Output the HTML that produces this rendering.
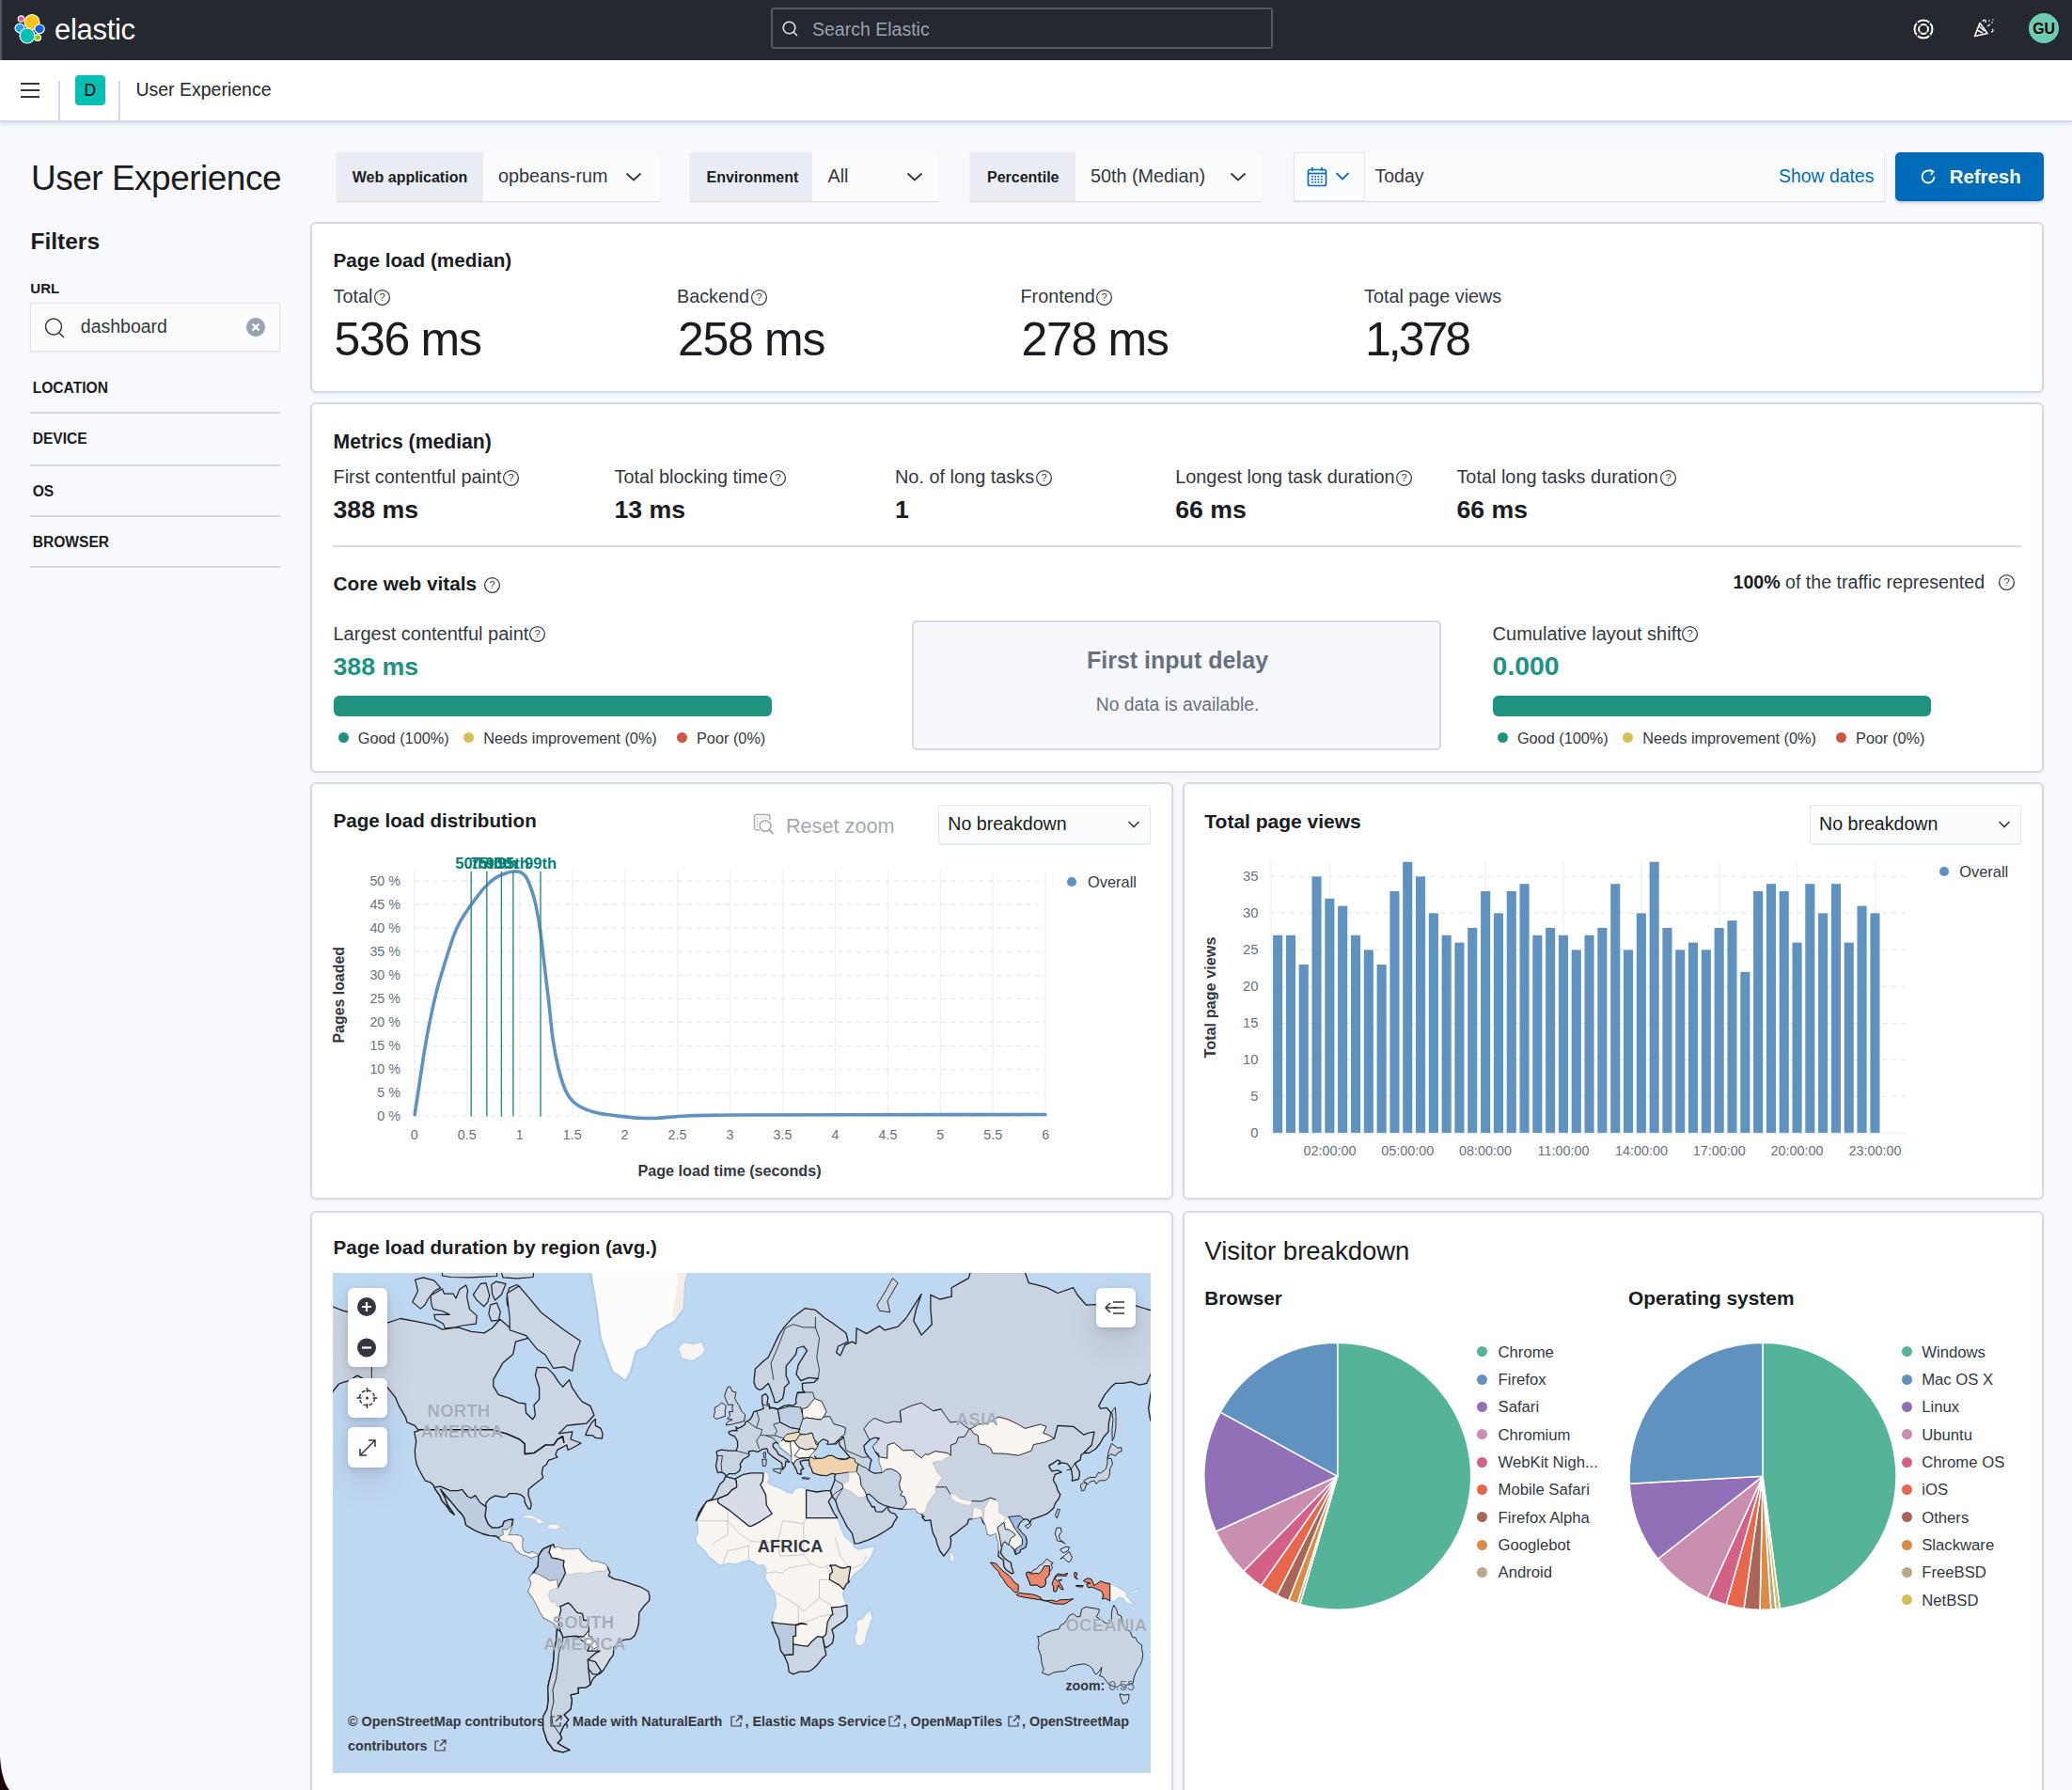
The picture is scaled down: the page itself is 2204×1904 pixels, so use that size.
<!DOCTYPE html><html><head><meta charset="utf-8"><style>
*{margin:0;padding:0;box-sizing:border-box}
html,body{width:2204px;height:1904px;overflow:hidden;background:#f8f9fc;font-family:"Liberation Sans",sans-serif;position:relative}
.t{position:absolute;white-space:nowrap}
.a{position:absolute}
.panel{position:absolute;background:#fff;border:2px solid #d3dae6;border-radius:6px;box-shadow:0 1px 3px rgba(0,0,0,0.04),0 3px 6px rgba(0,0,0,0.02)}
</style></head><body><div id="root" style="position:absolute;left:0;top:0;width:2204px;height:1904px;overflow:hidden">
<div class="a" style="left:0;top:0;width:2204px;height:64px;background:#25282f"></div>
<div class="a" style="left:0;top:0;width:2px;height:64px;background:#55575e"></div>
<svg class="a" style="left:15px;top:13px" width="36" height="36" viewBox="0 0 36 36">
<g stroke="#fff" stroke-width="1.2">
<circle cx="19" cy="10.5" r="8" fill="#fec514"/>
<ellipse cx="7.5" cy="7" rx="3.3" ry="3.2" fill="#f04e98"/>
<ellipse cx="6" cy="17" rx="5" ry="4.8" fill="#1ba9f5"/>
<ellipse cx="27" cy="17.8" rx="5.2" ry="4.8" fill="#0b64dd"/>
<circle cx="14" cy="25" r="8" fill="#00bfb3"/>
<ellipse cx="25" cy="27" rx="3.5" ry="3.3" fill="#93c90e"/>
</g></svg>
<div class="t " style="left:58.0px;top:15.8px;font-size:31px;line-height:31px;color:#ffffff;font-weight:400;letter-spacing:-0.3px">elastic</div>
<div class="a" style="left:820px;top:8px;width:534px;height:44px;border:2px solid #55585f;border-radius:3px;background:#25282f"></div>
<svg class="a" style="left:832px;top:22px" width="18" height="17" viewBox="0 0 18 17"><circle cx="7.5" cy="7.5" r="6.3" fill="none" stroke="#dfe5ef" stroke-width="1.6"/><path d="M12 12 L16 16" stroke="#dfe5ef" stroke-width="1.6"/></svg>
<div class="t " style="left:864.0px;top:21.7px;font-size:19.5px;line-height:19.5px;color:#98a2b3;font-weight:400;">Search Elastic</div>
<svg class="a" style="left:2034px;top:19px" width="24" height="24" viewBox="0 0 24 24"><circle cx="12" cy="12" r="9.5" fill="none" stroke="#fff" stroke-width="2"/><circle cx="12" cy="12" r="5" fill="none" stroke="#fff" stroke-width="2"/><path d="M4.5 4.5L8.5 8.5M19.5 4.5L15.5 8.5M4.5 19.5L8.5 15.5M19.5 19.5L15.5 15.5" stroke="#25282f" stroke-width="1.6"/></svg>
<svg class="a" style="left:2099px;top:19px" width="24" height="24" viewBox="0 0 24 24"><path d="M1.5 19.5 L7 5.5 L15 16.5 Z" fill="none" stroke="#fff" stroke-width="1.6" stroke-linejoin="round"/><path d="M4 13 L10 16M6 9 L12 14" stroke="#fff" stroke-width="1.4"/><path d="M10 4 C11 1,14 2,13 5 M15 9 L18 7 M20 12 C22 13,21 15,19 15" fill="none" stroke="#fff" stroke-width="1.3"/><circle cx="17" cy="3" r="0.8" fill="#fff"/><circle cx="20" cy="5" r="0.8" fill="#fff"/><circle cx="21" cy="2" r="0.7" fill="#fff"/></svg>
<div class="a" style="left:2158px;top:14px;width:32px;height:32px;border-radius:50%;background:#6dccb1"></div>
<div class="t " style="left:2162.3px;top:22.8px;font-size:15.8px;line-height:15.8px;color:#000;font-weight:700;">GU</div>
<div class="a" style="left:0;top:64px;width:2204px;height:66px;background:#fff;border-bottom:2px solid #d3dae6;box-shadow:0 2px 4px rgba(152,162,179,0.25)"></div>
<div class="a" style="left:22px;top:88px;width:20px;height:2px;background:#343741"></div>
<div class="a" style="left:22px;top:95px;width:20px;height:2px;background:#343741"></div>
<div class="a" style="left:22px;top:102px;width:20px;height:2px;background:#343741"></div>
<div class="a" style="left:62px;top:86px;width:2px;height:42px;background:#d3dae6"></div>
<div class="a" style="left:126px;top:86px;width:2px;height:42px;background:#d3dae6"></div>
<div class="a" style="left:80px;top:80px;width:32px;height:32px;border-radius:4px;background:#00bfb3"></div>
<div class="t " style="left:89.5px;top:87.7px;font-size:17.5px;line-height:17.5px;color:#000;font-weight:400;">D</div>
<div class="t " style="left:144.4px;top:86.1px;font-size:19.5px;line-height:19.5px;color:#25272c;font-weight:400;">User Experience</div>
<div class="t " style="left:33.0px;top:171.2px;font-size:37px;line-height:37px;color:#1a1c21;font-weight:400;letter-spacing:-0.5px">User Experience</div>
<div class="t " style="left:32.5px;top:245.3px;font-size:24.5px;line-height:24.5px;color:#1a1c21;font-weight:700;">Filters</div>
<div class="t " style="left:32.3px;top:299.3px;font-size:15px;line-height:15px;color:#1a1c21;font-weight:700;">URL</div>
<div class="a" style="left:32px;top:322px;width:266px;height:52px;background:#fbfcfd;border:1px solid #dde2ea;box-shadow:0 1px 2px rgba(0,0,0,0.05)"></div>
<svg class="a" style="left:47px;top:338px" width="24" height="22" viewBox="0 0 24 22"><circle cx="10" cy="9.5" r="8.5" fill="none" stroke="#343741" stroke-width="1.5"/><path d="M16 16 L21 21" stroke="#343741" stroke-width="1.5"/></svg>
<div class="t " style="left:85.8px;top:337.8px;font-size:19.5px;line-height:19.5px;color:#343741;font-weight:400;">dashboard</div>
<div class="a" style="left:262px;top:338px;width:20px;height:20px;border-radius:50%;background:#98a2b3"></div>
<svg class="a" style="left:262px;top:338px" width="20" height="20" viewBox="0 0 20 20"><path d="M6.5 6.5L13.5 13.5M13.5 6.5L6.5 13.5" stroke="#fff" stroke-width="2.4"/></svg>
<div class="t " style="left:34.7px;top:404.6px;font-size:15.6px;line-height:15.6px;color:#1a1c21;font-weight:700;">LOCATION</div>
<div class="a" style="left:32px;top:438px;width:266px;height:2px;background:#d3dae6"></div>
<div class="t " style="left:34.7px;top:458.8px;font-size:15.6px;line-height:15.6px;color:#1a1c21;font-weight:700;">DEVICE</div>
<div class="a" style="left:32px;top:494px;width:266px;height:2px;background:#d3dae6"></div>
<div class="t " style="left:34.7px;top:514.8px;font-size:15.6px;line-height:15.6px;color:#1a1c21;font-weight:700;">OS</div>
<div class="a" style="left:32px;top:548px;width:266px;height:2px;background:#d3dae6"></div>
<div class="t " style="left:34.7px;top:568.7px;font-size:15.6px;line-height:15.6px;color:#1a1c21;font-weight:700;">BROWSER</div>
<div class="a" style="left:32px;top:602px;width:266px;height:2px;background:#d3dae6"></div>
<div class="a" style="left:358px;top:162px;width:344px;height:52px;background:#fbfcfd;box-shadow:0 1px 1px rgba(152,162,179,0.35)"></div>
<div class="a" style="left:358px;top:162px;width:156px;height:52px;background:#e9edf3"></div>
<div class="t " style="left:374.8px;top:181.1px;font-size:16px;line-height:16px;color:#1a1c21;font-weight:700;">Web application</div>
<div class="t " style="left:529.9px;top:177.8px;font-size:19.8px;line-height:19.8px;color:#343741;font-weight:400;">opbeans-rum</div>
<svg class="a" style="left:665px;top:182px" width="18" height="12" viewBox="0 0 18 12"><path d="M1.5 2.5 L9 9.5 L16.5 2.5" fill="none" stroke="#343741" stroke-width="1.8"/></svg>
<div class="a" style="left:734px;top:162px;width:264px;height:52px;background:#fbfcfd;box-shadow:0 1px 1px rgba(152,162,179,0.35)"></div>
<div class="a" style="left:734px;top:162px;width:130px;height:52px;background:#e9edf3"></div>
<div class="t " style="left:751.5px;top:181.1px;font-size:16px;line-height:16px;color:#1a1c21;font-weight:700;">Environment</div>
<div class="t " style="left:880.5px;top:177.8px;font-size:19.8px;line-height:19.8px;color:#343741;font-weight:400;">All</div>
<svg class="a" style="left:964px;top:182px" width="18" height="12" viewBox="0 0 18 12"><path d="M1.5 2.5 L9 9.5 L16.5 2.5" fill="none" stroke="#343741" stroke-width="1.8"/></svg>
<div class="a" style="left:1032px;top:162px;width:310px;height:52px;background:#fbfcfd;box-shadow:0 1px 1px rgba(152,162,179,0.35)"></div>
<div class="a" style="left:1032px;top:162px;width:112px;height:52px;background:#e9edf3"></div>
<div class="t " style="left:1050.0px;top:181.1px;font-size:16px;line-height:16px;color:#1a1c21;font-weight:700;">Percentile</div>
<div class="t " style="left:1160.0px;top:177.8px;font-size:19.8px;line-height:19.8px;color:#343741;font-weight:400;">50th (Median)</div>
<svg class="a" style="left:1308px;top:182px" width="18" height="12" viewBox="0 0 18 12"><path d="M1.5 2.5 L9 9.5 L16.5 2.5" fill="none" stroke="#343741" stroke-width="1.8"/></svg>
<div class="a" style="left:1376px;top:162px;width:629px;height:52px;background:#fbfcfd;box-shadow:0 1px 1px rgba(152,162,179,0.35)"></div>
<div class="a" style="left:1376px;top:162px;width:76px;height:52px;border:1px solid #e3e8f0;background:#fbfcfd"></div>
<div class="a" style="left:2004px;top:162px;width:1px;height:52px;background:#e3e8f0"></div>
<svg class="a" style="left:1390px;top:177px" width="22" height="22" viewBox="0 0 22 22"><rect x="1.5" y="3.5" width="19" height="17" rx="2" fill="none" stroke="#0b6bc6" stroke-width="1.7"/><path d="M1.5 7.5 H20.5" stroke="#0b6bc6" stroke-width="1.7"/><path d="M6 1 V5 M16 1 V5" stroke="#0b6bc6" stroke-width="1.7"/><rect x="5.0" y="10.0" width="1.8" height="1.6" fill="#0b6bc6"/><rect x="5.0" y="13.0" width="1.8" height="1.6" fill="#0b6bc6"/><rect x="5.0" y="16.0" width="1.8" height="1.6" fill="#0b6bc6"/><rect x="8.3" y="10.0" width="1.8" height="1.6" fill="#0b6bc6"/><rect x="8.3" y="13.0" width="1.8" height="1.6" fill="#0b6bc6"/><rect x="8.3" y="16.0" width="1.8" height="1.6" fill="#0b6bc6"/><rect x="11.6" y="10.0" width="1.8" height="1.6" fill="#0b6bc6"/><rect x="11.6" y="13.0" width="1.8" height="1.6" fill="#0b6bc6"/><rect x="11.6" y="16.0" width="1.8" height="1.6" fill="#0b6bc6"/><rect x="14.9" y="10.0" width="1.8" height="1.6" fill="#0b6bc6"/><rect x="14.9" y="13.0" width="1.8" height="1.6" fill="#0b6bc6"/><rect x="14.9" y="16.0" width="1.8" height="1.6" fill="#0b6bc6"/></svg>
<svg class="a" style="left:1420px;top:182px" width="16" height="11" viewBox="0 0 16 11"><path d="M1.5 2 L8 8.5 L14.5 2" fill="none" stroke="#0b6bc6" stroke-width="1.8"/></svg>
<div class="t " style="left:1462.5px;top:178.1px;font-size:19.5px;line-height:19.5px;color:#343741;font-weight:400;">Today</div>
<div class="t " style="left:1892.0px;top:178.2px;font-size:19.4px;line-height:19.4px;color:#006bb8;font-weight:400;">Show dates</div>
<div class="a" style="left:2016px;top:162px;width:158px;height:52px;border-radius:5px;background:#006bb8;box-shadow:0 2px 3px rgba(0,60,120,0.2)"></div>
<svg class="a" style="left:2041px;top:178px" width="20" height="20" viewBox="0 0 20 20"><path d="M16.5 10 A6.5 6.5 0 1 1 13.5 4.5" fill="none" stroke="#fff" stroke-width="1.8"/><path d="M12 2.5 L15.5 4.5 L13 8" fill="none" stroke="#fff" stroke-width="1.6"/></svg>
<div class="t " style="left:2073.7px;top:178.2px;font-size:20.4px;line-height:20.4px;color:#ffffff;font-weight:700;">Refresh</div>
<div class="panel" style="left:330px;top:236px;width:1844px;height:182px"></div>
<div class="t " style="left:354.5px;top:266.9px;font-size:20.7px;line-height:20.7px;color:#1a1c21;font-weight:700;">Page load (median)</div>
<div class="t " style="left:354.5px;top:306.2px;font-size:19.8px;line-height:19.8px;color:#343741;font-weight:400;">Total</div>
<svg class="a" style="left:396.8px;top:307.0px" width="19" height="19" viewBox="0 0 19 19"><circle cx="9.5" cy="9.5" r="7.9" fill="none" stroke="#343741" stroke-width="1.3"/><text x="9.5" y="13.3" text-anchor="middle" font-family="Liberation Sans" font-size="11.1" fill="#343741">?</text></svg>
<div class="t " style="left:355.5px;top:335.7px;font-size:50px;line-height:50px;color:#1a1c21;font-weight:400;letter-spacing:-1.3px">536 ms</div>
<div class="t " style="left:720.0px;top:306.2px;font-size:19.8px;line-height:19.8px;color:#343741;font-weight:400;">Backend</div>
<svg class="a" style="left:797.6px;top:307.0px" width="19" height="19" viewBox="0 0 19 19"><circle cx="9.5" cy="9.5" r="7.9" fill="none" stroke="#343741" stroke-width="1.3"/><text x="9.5" y="13.3" text-anchor="middle" font-family="Liberation Sans" font-size="11.1" fill="#343741">?</text></svg>
<div class="t " style="left:721.0px;top:335.7px;font-size:50px;line-height:50px;color:#1a1c21;font-weight:400;letter-spacing:-1.3px">258 ms</div>
<div class="t " style="left:1085.5px;top:306.2px;font-size:19.8px;line-height:19.8px;color:#343741;font-weight:400;">Frontend</div>
<svg class="a" style="left:1165.3px;top:307.0px" width="19" height="19" viewBox="0 0 19 19"><circle cx="9.5" cy="9.5" r="7.9" fill="none" stroke="#343741" stroke-width="1.3"/><text x="9.5" y="13.3" text-anchor="middle" font-family="Liberation Sans" font-size="11.1" fill="#343741">?</text></svg>
<div class="t " style="left:1086.5px;top:335.7px;font-size:50px;line-height:50px;color:#1a1c21;font-weight:400;letter-spacing:-1.3px">278 ms</div>
<div class="t " style="left:1451.0px;top:306.2px;font-size:19.8px;line-height:19.8px;color:#343741;font-weight:400;">Total page views</div>
<div class="t " style="left:1452.0px;top:335.7px;font-size:50px;line-height:50px;color:#1a1c21;font-weight:400;letter-spacing:-3px">1,378</div>
<div class="panel" style="left:330px;top:428px;width:1844px;height:394px"></div>
<div class="t " style="left:354.5px;top:459.4px;font-size:21.2px;line-height:21.2px;color:#1a1c21;font-weight:700;">Metrics (median)</div>
<div class="t " style="left:354.5px;top:498.2px;font-size:19.9px;line-height:19.9px;color:#343741;font-weight:400;">First contentful paint</div>
<svg class="a" style="left:534.2px;top:498.5px" width="19" height="19" viewBox="0 0 19 19"><circle cx="9.5" cy="9.5" r="7.9" fill="none" stroke="#343741" stroke-width="1.3"/><text x="9.5" y="13.3" text-anchor="middle" font-family="Liberation Sans" font-size="11.1" fill="#343741">?</text></svg>
<div class="t " style="left:354.5px;top:529.4px;font-size:26.7px;line-height:26.7px;color:#1a1c21;font-weight:700;">388 ms</div>
<div class="t " style="left:653.5px;top:498.2px;font-size:19.9px;line-height:19.9px;color:#343741;font-weight:400;">Total blocking time</div>
<svg class="a" style="left:817.7px;top:498.5px" width="19" height="19" viewBox="0 0 19 19"><circle cx="9.5" cy="9.5" r="7.9" fill="none" stroke="#343741" stroke-width="1.3"/><text x="9.5" y="13.3" text-anchor="middle" font-family="Liberation Sans" font-size="11.1" fill="#343741">?</text></svg>
<div class="t " style="left:653.5px;top:529.4px;font-size:26.7px;line-height:26.7px;color:#1a1c21;font-weight:700;">13 ms</div>
<div class="t " style="left:952.0px;top:498.2px;font-size:19.9px;line-height:19.9px;color:#343741;font-weight:400;">No. of long tasks</div>
<svg class="a" style="left:1100.7px;top:498.5px" width="19" height="19" viewBox="0 0 19 19"><circle cx="9.5" cy="9.5" r="7.9" fill="none" stroke="#343741" stroke-width="1.3"/><text x="9.5" y="13.3" text-anchor="middle" font-family="Liberation Sans" font-size="11.1" fill="#343741">?</text></svg>
<div class="t " style="left:952.0px;top:529.4px;font-size:26.7px;line-height:26.7px;color:#1a1c21;font-weight:700;">1</div>
<div class="t " style="left:1250.2px;top:498.2px;font-size:19.9px;line-height:19.9px;color:#343741;font-weight:400;">Longest long task duration</div>
<svg class="a" style="left:1484.1px;top:498.5px" width="19" height="19" viewBox="0 0 19 19"><circle cx="9.5" cy="9.5" r="7.9" fill="none" stroke="#343741" stroke-width="1.3"/><text x="9.5" y="13.3" text-anchor="middle" font-family="Liberation Sans" font-size="11.1" fill="#343741">?</text></svg>
<div class="t " style="left:1250.2px;top:529.4px;font-size:26.7px;line-height:26.7px;color:#1a1c21;font-weight:700;">66 ms</div>
<div class="t " style="left:1549.4px;top:498.2px;font-size:19.9px;line-height:19.9px;color:#343741;font-weight:400;">Total long tasks duration</div>
<svg class="a" style="left:1764.5px;top:498.5px" width="19" height="19" viewBox="0 0 19 19"><circle cx="9.5" cy="9.5" r="7.9" fill="none" stroke="#343741" stroke-width="1.3"/><text x="9.5" y="13.3" text-anchor="middle" font-family="Liberation Sans" font-size="11.1" fill="#343741">?</text></svg>
<div class="t " style="left:1549.4px;top:529.4px;font-size:26.7px;line-height:26.7px;color:#1a1c21;font-weight:700;">66 ms</div>
<div class="a" style="left:354px;top:580px;width:1796px;height:2px;background:#d3dae6"></div>
<div class="t " style="left:354.5px;top:611.0px;font-size:20.8px;line-height:20.8px;color:#1a1c21;font-weight:700;">Core web vitals</div>
<svg class="a" style="left:513.5px;top:613.2px" width="19" height="19" viewBox="0 0 19 19"><circle cx="9.5" cy="9.5" r="7.9" fill="none" stroke="#343741" stroke-width="1.3"/><text x="9.5" y="13.3" text-anchor="middle" font-family="Liberation Sans" font-size="11.1" fill="#343741">?</text></svg>
<div class="t " style="left:1843.5px;top:609.7px;font-size:19.6px;line-height:19.6px;color:#343741;font-weight:400;"><b style="color:#1a1c21">100%</b> of the traffic represented</div>
<svg class="a" style="left:2124.9px;top:610.0px" width="19" height="19" viewBox="0 0 19 19"><circle cx="9.5" cy="9.5" r="7.9" fill="none" stroke="#343741" stroke-width="1.3"/><text x="9.5" y="13.3" text-anchor="middle" font-family="Liberation Sans" font-size="11.1" fill="#343741">?</text></svg>
<div class="t " style="left:354.5px;top:663.8px;font-size:20px;line-height:20px;color:#343741;font-weight:400;">Largest contentful paint</div>
<svg class="a" style="left:561.8px;top:664.5px" width="19" height="19" viewBox="0 0 19 19"><circle cx="9.5" cy="9.5" r="7.9" fill="none" stroke="#343741" stroke-width="1.3"/><text x="9.5" y="13.3" text-anchor="middle" font-family="Liberation Sans" font-size="11.1" fill="#343741">?</text></svg>
<div class="t " style="left:354.5px;top:695.8px;font-size:26.7px;line-height:26.7px;color:#209280;font-weight:700;">388 ms</div>
<div class="a" style="left:354.5px;top:740px;width:466px;height:22px;border-radius:6px;background:#209280"></div>
<div class="a" style="left:359.5px;top:779px;width:11px;height:11px;border-radius:50%;background:#209280"></div>
<div class="t " style="left:380.8px;top:777.2px;font-size:16.3px;line-height:16.3px;color:#343741;font-weight:400;">Good (100%)</div>
<div class="a" style="left:492.9px;top:779px;width:11px;height:11px;border-radius:50%;background:#d6bf57"></div>
<div class="t " style="left:514.2px;top:777.2px;font-size:16.3px;line-height:16.3px;color:#343741;font-weight:400;">Needs improvement (0%)</div>
<div class="a" style="left:719.7px;top:779px;width:11px;height:11px;border-radius:50%;background:#cc5642"></div>
<div class="t " style="left:741.0px;top:777.2px;font-size:16.3px;line-height:16.3px;color:#343741;font-weight:400;">Poor (0%)</div>
<div class="t " style="left:1587.6px;top:663.8px;font-size:20px;line-height:20px;color:#343741;font-weight:400;">Cumulative layout shift</div>
<svg class="a" style="left:1788.3px;top:664.5px" width="19" height="19" viewBox="0 0 19 19"><circle cx="9.5" cy="9.5" r="7.9" fill="none" stroke="#343741" stroke-width="1.3"/><text x="9.5" y="13.3" text-anchor="middle" font-family="Liberation Sans" font-size="11.1" fill="#343741">?</text></svg>
<div class="t " style="left:1587.6px;top:694.4px;font-size:28.4px;line-height:28.4px;color:#209280;font-weight:700;">0.000</div>
<div class="a" style="left:1587.6px;top:740px;width:466px;height:22px;border-radius:6px;background:#209280"></div>
<div class="a" style="left:1592.6px;top:779px;width:11px;height:11px;border-radius:50%;background:#209280"></div>
<div class="t " style="left:1613.9px;top:777.2px;font-size:16.3px;line-height:16.3px;color:#343741;font-weight:400;">Good (100%)</div>
<div class="a" style="left:1726.0px;top:779px;width:11px;height:11px;border-radius:50%;background:#d6bf57"></div>
<div class="t " style="left:1747.3px;top:777.2px;font-size:16.3px;line-height:16.3px;color:#343741;font-weight:400;">Needs improvement (0%)</div>
<div class="a" style="left:1952.8px;top:779px;width:11px;height:11px;border-radius:50%;background:#cc5642"></div>
<div class="t " style="left:1974.1px;top:777.2px;font-size:16.3px;line-height:16.3px;color:#343741;font-weight:400;">Poor (0%)</div>
<div class="a" style="left:970px;top:660px;width:563px;height:138px;border:2px solid #d3dae6;border-radius:5px;background:#f5f7fa"></div>
<div class="t " style="left:1156.0px;top:690.4px;font-size:25px;line-height:25px;color:#69707d;font-weight:700;">First input delay</div>
<div class="t " style="left:1165.8px;top:740.1px;font-size:19.3px;line-height:19.3px;color:#69707d;font-weight:400;">No data is available.</div>
<div class="panel" style="left:330px;top:832px;width:918px;height:444px"></div>
<div class="t " style="left:354.5px;top:862.9px;font-size:20.6px;line-height:20.6px;color:#1a1c21;font-weight:700;">Page load distribution</div>
<svg class="a" style="left:801px;top:865px" width="24" height="24" viewBox="0 0 24 24"><path d="M7 18 H4 Q1.5 18 1.5 15.5 V4 Q1.5 1.5 4 1.5 H15.5 Q18 1.5 18 4 V7" fill="none" stroke="#a7a9ae" stroke-width="1.4"/><path d="M4.5 5 H15 M4.5 5 V15" stroke="#a7a9ae" stroke-width="1.2" stroke-dasharray="1.3 1.7"/><circle cx="13" cy="13.5" r="5.8" fill="none" stroke="#a7a9ae" stroke-width="1.6"/><path d="M17.2 17.7 L21.5 22" stroke="#a7a9ae" stroke-width="1.8"/></svg>
<div class="t " style="left:835.9px;top:868.3px;font-size:21.7px;line-height:21.7px;color:#a7a9ae;font-weight:400;">Reset zoom</div>
<div class="a" style="left:998px;top:856px;width:226px;height:42px;background:#fbfcfd;border:1px solid #e3e8f0;border-radius:3px;box-shadow:0 1px 1px rgba(152,162,179,0.2)"></div>
<div class="t " style="left:1008.3px;top:867.4px;font-size:19.6px;line-height:19.6px;color:#1a1c21;font-weight:400;">No breakdown</div>
<svg class="a" style="left:1199px;top:872px" width="14" height="10" viewBox="0 0 14 10"><path d="M1.5 2 L7 7.5 L12.5 2" fill="none" stroke="#343741" stroke-width="1.6"/></svg>
<svg class="a" style="left:0;top:0" width="2204" height="1904"><line x1="440.8" y1="926.8" x2="440.8" y2="1187.4" stroke="#edf0f5" stroke-width="1.3"/><line x1="496.8" y1="926.8" x2="496.8" y2="1187.4" stroke="#edf0f5" stroke-width="1.3"/><line x1="552.7" y1="926.8" x2="552.7" y2="1187.4" stroke="#edf0f5" stroke-width="1.3"/><line x1="608.7" y1="926.8" x2="608.7" y2="1187.4" stroke="#edf0f5" stroke-width="1.3"/><line x1="664.6" y1="926.8" x2="664.6" y2="1187.4" stroke="#edf0f5" stroke-width="1.3"/><line x1="720.5" y1="926.8" x2="720.5" y2="1187.4" stroke="#edf0f5" stroke-width="1.3"/><line x1="776.5" y1="926.8" x2="776.5" y2="1187.4" stroke="#edf0f5" stroke-width="1.3"/><line x1="832.5" y1="926.8" x2="832.5" y2="1187.4" stroke="#edf0f5" stroke-width="1.3"/><line x1="888.4" y1="926.8" x2="888.4" y2="1187.4" stroke="#edf0f5" stroke-width="1.3"/><line x1="944.4" y1="926.8" x2="944.4" y2="1187.4" stroke="#edf0f5" stroke-width="1.3"/><line x1="1000.3" y1="926.8" x2="1000.3" y2="1187.4" stroke="#edf0f5" stroke-width="1.3"/><line x1="1056.2" y1="926.8" x2="1056.2" y2="1187.4" stroke="#edf0f5" stroke-width="1.3"/><line x1="1112.2" y1="926.8" x2="1112.2" y2="1187.4" stroke="#edf0f5" stroke-width="1.3"/><line x1="440.8" y1="1187.4" x2="1112.2" y2="1187.4" stroke="#e6e9ef" stroke-width="1.2" stroke-dasharray="5 5"/><line x1="440.8" y1="1162.4" x2="1112.2" y2="1162.4" stroke="#e6e9ef" stroke-width="1.2" stroke-dasharray="5 5"/><line x1="440.8" y1="1137.4" x2="1112.2" y2="1137.4" stroke="#e6e9ef" stroke-width="1.2" stroke-dasharray="5 5"/><line x1="440.8" y1="1112.3" x2="1112.2" y2="1112.3" stroke="#e6e9ef" stroke-width="1.2" stroke-dasharray="5 5"/><line x1="440.8" y1="1087.3" x2="1112.2" y2="1087.3" stroke="#e6e9ef" stroke-width="1.2" stroke-dasharray="5 5"/><line x1="440.8" y1="1062.3" x2="1112.2" y2="1062.3" stroke="#e6e9ef" stroke-width="1.2" stroke-dasharray="5 5"/><line x1="440.8" y1="1037.3" x2="1112.2" y2="1037.3" stroke="#e6e9ef" stroke-width="1.2" stroke-dasharray="5 5"/><line x1="440.8" y1="1012.3" x2="1112.2" y2="1012.3" stroke="#e6e9ef" stroke-width="1.2" stroke-dasharray="5 5"/><line x1="440.8" y1="987.2" x2="1112.2" y2="987.2" stroke="#e6e9ef" stroke-width="1.2" stroke-dasharray="5 5"/><line x1="440.8" y1="962.2" x2="1112.2" y2="962.2" stroke="#e6e9ef" stroke-width="1.2" stroke-dasharray="5 5"/><line x1="440.8" y1="937.2" x2="1112.2" y2="937.2" stroke="#e6e9ef" stroke-width="1.2" stroke-dasharray="5 5"/><path d="M441.1,1185.7 C442.0,1179.8 444.7,1162.2 446.5,1150.4 C448.3,1138.6 450.0,1126.4 451.9,1115.1 C453.8,1103.8 455.9,1092.8 458.0,1082.8 C460.1,1072.8 462.1,1063.4 464.2,1055.2 C466.2,1047.0 468.2,1040.6 470.3,1033.7 C472.4,1026.8 474.4,1020.1 476.5,1013.7 C478.6,1007.3 480.6,1000.7 482.6,995.3 C484.7,989.9 486.5,985.8 488.8,981.4 C491.1,977.0 493.8,973.0 496.4,969.2 C498.9,965.4 501.0,962.5 504.1,958.4 C507.2,954.3 511.2,948.6 514.9,944.6 C518.5,940.6 522.2,937.1 526.0,934.5 C529.8,931.9 534.4,930.2 537.7,929.0 C541.0,927.8 543.4,927.2 546.0,927.0 C548.6,926.8 550.9,926.7 553.1,927.6 C555.3,928.5 557.2,929.2 559.2,932.3 C561.2,935.4 563.5,941.0 565.3,946.1 C567.1,951.2 568.5,955.8 570.0,963.0 C571.5,970.2 573.1,978.4 574.6,989.2 C576.1,1000.0 577.7,1014.8 579.2,1027.6 C580.7,1040.4 582.3,1052.7 583.8,1066.0 C585.3,1079.3 586.6,1095.5 588.4,1107.5 C590.2,1119.5 592.2,1129.2 594.5,1138.2 C596.8,1147.2 599.6,1155.7 602.2,1161.3 C604.8,1166.9 606.6,1168.9 609.9,1172.0 C613.2,1175.1 617.6,1177.7 622.2,1179.7 C626.8,1181.8 631.2,1183.0 637.6,1184.3 C644.0,1185.6 653.5,1186.6 660.6,1187.4 C667.7,1188.2 673.4,1189.0 680.0,1189.3 C686.6,1189.6 691.7,1189.7 700.0,1189.3 C708.3,1188.9 716.7,1187.5 730.0,1187.0 C743.3,1186.5 751.7,1186.2 780.0,1186.0 C808.3,1185.8 844.7,1185.9 900.0,1185.8 C955.3,1185.7 1076.7,1185.5 1112.0,1185.5" fill="none" stroke="#6092c0" stroke-width="3.6" stroke-linecap="round"/><line x1="501.2" y1="926.8" x2="501.2" y2="1187.4" stroke="#2c8c7c" stroke-width="1.4"/><line x1="517.8" y1="926.8" x2="517.8" y2="1187.4" stroke="#2c8c7c" stroke-width="1.4"/><line x1="533.4" y1="926.8" x2="533.4" y2="1187.4" stroke="#2c8c7c" stroke-width="1.4"/><line x1="545.9" y1="926.8" x2="545.9" y2="1187.4" stroke="#2c8c7c" stroke-width="1.4"/><line x1="575.0" y1="926.8" x2="575.0" y2="1187.4" stroke="#2c8c7c" stroke-width="1.4"/></svg>
<div class="t" style="left:471.2px;top:910px;width:60px;text-align:center;font-size:16.5px;line-height:16px;color:#017d73;font-weight:700">50th</div>
<div class="t" style="left:487.79999999999995px;top:910px;width:60px;text-align:center;font-size:16.5px;line-height:16px;color:#017d73;font-weight:700">75th</div>
<div class="t" style="left:503.4px;top:910px;width:60px;text-align:center;font-size:16.5px;line-height:16px;color:#017d73;font-weight:700">90th</div>
<div class="t" style="left:515.9px;top:910px;width:60px;text-align:center;font-size:16.5px;line-height:16px;color:#017d73;font-weight:700">95th</div>
<div class="t" style="left:545.0px;top:910px;width:60px;text-align:center;font-size:16.5px;line-height:16px;color:#017d73;font-weight:700">99th</div>
<div class="t" style="left:366px;top:1178.9px;width:60px;text-align:right;font-size:14.3px;line-height:17px;color:#69707d">0 %</div>
<div class="t" style="left:366px;top:1153.9px;width:60px;text-align:right;font-size:14.3px;line-height:17px;color:#69707d">5 %</div>
<div class="t" style="left:366px;top:1128.9px;width:60px;text-align:right;font-size:14.3px;line-height:17px;color:#69707d">10 %</div>
<div class="t" style="left:366px;top:1103.8px;width:60px;text-align:right;font-size:14.3px;line-height:17px;color:#69707d">15 %</div>
<div class="t" style="left:366px;top:1078.8px;width:60px;text-align:right;font-size:14.3px;line-height:17px;color:#69707d">20 %</div>
<div class="t" style="left:366px;top:1053.8px;width:60px;text-align:right;font-size:14.3px;line-height:17px;color:#69707d">25 %</div>
<div class="t" style="left:366px;top:1028.8px;width:60px;text-align:right;font-size:14.3px;line-height:17px;color:#69707d">30 %</div>
<div class="t" style="left:366px;top:1003.8px;width:60px;text-align:right;font-size:14.3px;line-height:17px;color:#69707d">35 %</div>
<div class="t" style="left:366px;top:978.7px;width:60px;text-align:right;font-size:14.3px;line-height:17px;color:#69707d">40 %</div>
<div class="t" style="left:366px;top:953.7px;width:60px;text-align:right;font-size:14.3px;line-height:17px;color:#69707d">45 %</div>
<div class="t" style="left:366px;top:928.7px;width:60px;text-align:right;font-size:14.3px;line-height:17px;color:#69707d">50 %</div>
<div class="t" style="left:410.8px;top:1199px;width:60px;text-align:center;font-size:14.3px;line-height:17px;color:#69707d">0</div>
<div class="t" style="left:466.8px;top:1199px;width:60px;text-align:center;font-size:14.3px;line-height:17px;color:#69707d">0.5</div>
<div class="t" style="left:522.7px;top:1199px;width:60px;text-align:center;font-size:14.3px;line-height:17px;color:#69707d">1</div>
<div class="t" style="left:578.7px;top:1199px;width:60px;text-align:center;font-size:14.3px;line-height:17px;color:#69707d">1.5</div>
<div class="t" style="left:634.6px;top:1199px;width:60px;text-align:center;font-size:14.3px;line-height:17px;color:#69707d">2</div>
<div class="t" style="left:690.5px;top:1199px;width:60px;text-align:center;font-size:14.3px;line-height:17px;color:#69707d">2.5</div>
<div class="t" style="left:746.5px;top:1199px;width:60px;text-align:center;font-size:14.3px;line-height:17px;color:#69707d">3</div>
<div class="t" style="left:802.5px;top:1199px;width:60px;text-align:center;font-size:14.3px;line-height:17px;color:#69707d">3.5</div>
<div class="t" style="left:858.4px;top:1199px;width:60px;text-align:center;font-size:14.3px;line-height:17px;color:#69707d">4</div>
<div class="t" style="left:914.4px;top:1199px;width:60px;text-align:center;font-size:14.3px;line-height:17px;color:#69707d">4.5</div>
<div class="t" style="left:970.3px;top:1199px;width:60px;text-align:center;font-size:14.3px;line-height:17px;color:#69707d">5</div>
<div class="t" style="left:1026.2px;top:1199px;width:60px;text-align:center;font-size:14.3px;line-height:17px;color:#69707d">5.5</div>
<div class="t" style="left:1082.2px;top:1199px;width:60px;text-align:center;font-size:14.3px;line-height:17px;color:#69707d">6</div>
<div class="t " style="left:678.4px;top:1237.3px;font-size:16.2px;line-height:16.2px;color:#343741;font-weight:700;">Page load time (seconds)</div>
<div class="t" style="left:309px;top:1049px;width:103px;height:18px;font-size:15.9px;line-height:18px;color:#343741;font-weight:700;transform:rotate(-90deg);transform-origin:center">Pages loaded</div>
<div class="a" style="left:1135.3px;top:933px;width:10px;height:10px;border-radius:50%;background:#6092c0"></div>
<div class="t " style="left:1157.0px;top:930.1px;font-size:16.4px;line-height:16.4px;color:#343741;font-weight:400;">Overall</div>
<div class="panel" style="left:1258px;top:832px;width:916px;height:444px"></div>
<div class="t " style="left:1281.3px;top:863.0px;font-size:21px;line-height:21px;color:#1a1c21;font-weight:700;">Total page views</div>
<div class="a" style="left:1924.5px;top:856px;width:225.5px;height:42px;background:#fbfcfd;border:1px solid #e3e8f0;border-radius:3px;box-shadow:0 1px 1px rgba(152,162,179,0.2)"></div>
<div class="t " style="left:1935.0px;top:867.4px;font-size:19.6px;line-height:19.6px;color:#1a1c21;font-weight:400;">No breakdown</div>
<svg class="a" style="left:2125px;top:872px" width="14" height="10" viewBox="0 0 14 10"><path d="M1.5 2 L7 7.5 L12.5 2" fill="none" stroke="#343741" stroke-width="1.6"/></svg>
<svg class="a" style="left:0;top:0" width="2204" height="1904"><line x1="1352.2" y1="1205.4" x2="2029" y2="1205.4" stroke="#e6e9ef" stroke-width="1.2" stroke-dasharray="5 5"/><line x1="1352.2" y1="1166.4" x2="2029" y2="1166.4" stroke="#e6e9ef" stroke-width="1.2" stroke-dasharray="5 5"/><line x1="1352.2" y1="1127.4" x2="2029" y2="1127.4" stroke="#e6e9ef" stroke-width="1.2" stroke-dasharray="5 5"/><line x1="1352.2" y1="1088.4" x2="2029" y2="1088.4" stroke="#e6e9ef" stroke-width="1.2" stroke-dasharray="5 5"/><line x1="1352.2" y1="1049.4" x2="2029" y2="1049.4" stroke="#e6e9ef" stroke-width="1.2" stroke-dasharray="5 5"/><line x1="1352.2" y1="1010.4" x2="2029" y2="1010.4" stroke="#e6e9ef" stroke-width="1.2" stroke-dasharray="5 5"/><line x1="1352.2" y1="971.4" x2="2029" y2="971.4" stroke="#e6e9ef" stroke-width="1.2" stroke-dasharray="5 5"/><line x1="1352.2" y1="932.4" x2="2029" y2="932.4" stroke="#e6e9ef" stroke-width="1.2" stroke-dasharray="5 5"/><line x1="1352.2" y1="916.8" x2="1352.2" y2="1205.4" stroke="#edf0f5" stroke-width="1.3"/><line x1="1414.4" y1="916.8" x2="1414.4" y2="1205.4" stroke="#edf0f5" stroke-width="1.3"/><line x1="1497.3" y1="916.8" x2="1497.3" y2="1205.4" stroke="#edf0f5" stroke-width="1.3"/><line x1="1580.1" y1="916.8" x2="1580.1" y2="1205.4" stroke="#edf0f5" stroke-width="1.3"/><line x1="1663.0" y1="916.8" x2="1663.0" y2="1205.4" stroke="#edf0f5" stroke-width="1.3"/><line x1="1745.9" y1="916.8" x2="1745.9" y2="1205.4" stroke="#edf0f5" stroke-width="1.3"/><line x1="1828.8" y1="916.8" x2="1828.8" y2="1205.4" stroke="#edf0f5" stroke-width="1.3"/><line x1="1911.6" y1="916.8" x2="1911.6" y2="1205.4" stroke="#edf0f5" stroke-width="1.3"/><line x1="1994.5" y1="916.8" x2="1994.5" y2="1205.4" stroke="#edf0f5" stroke-width="1.3"/><rect x="1354.1" y="994.8" width="10.1" height="210.6" fill="#6092c0"/><rect x="1367.9" y="994.8" width="10.1" height="210.6" fill="#6092c0"/><rect x="1381.7" y="1026.0" width="10.1" height="179.4" fill="#6092c0"/><rect x="1395.5" y="932.4" width="10.1" height="273.0" fill="#6092c0"/><rect x="1409.3" y="955.8" width="10.1" height="249.6" fill="#6092c0"/><rect x="1423.1" y="963.6" width="10.1" height="241.8" fill="#6092c0"/><rect x="1437.0" y="994.8" width="10.1" height="210.6" fill="#6092c0"/><rect x="1450.8" y="1010.4" width="10.1" height="195.0" fill="#6092c0"/><rect x="1464.6" y="1026.0" width="10.1" height="179.4" fill="#6092c0"/><rect x="1478.4" y="948.0" width="10.1" height="257.4" fill="#6092c0"/><rect x="1492.2" y="916.8" width="10.1" height="288.6" fill="#6092c0"/><rect x="1506.0" y="932.4" width="10.1" height="273.0" fill="#6092c0"/><rect x="1519.8" y="971.4" width="10.1" height="234.0" fill="#6092c0"/><rect x="1533.6" y="994.8" width="10.1" height="210.6" fill="#6092c0"/><rect x="1547.4" y="1002.6" width="10.1" height="202.8" fill="#6092c0"/><rect x="1561.2" y="987.0" width="10.1" height="218.4" fill="#6092c0"/><rect x="1575.1" y="948.0" width="10.1" height="257.4" fill="#6092c0"/><rect x="1588.9" y="971.4" width="10.1" height="234.0" fill="#6092c0"/><rect x="1602.7" y="948.0" width="10.1" height="257.4" fill="#6092c0"/><rect x="1616.5" y="940.2" width="10.1" height="265.2" fill="#6092c0"/><rect x="1630.3" y="994.8" width="10.1" height="210.6" fill="#6092c0"/><rect x="1644.1" y="987.0" width="10.1" height="218.4" fill="#6092c0"/><rect x="1657.9" y="994.8" width="10.1" height="210.6" fill="#6092c0"/><rect x="1671.7" y="1010.4" width="10.1" height="195.0" fill="#6092c0"/><rect x="1685.5" y="994.8" width="10.1" height="210.6" fill="#6092c0"/><rect x="1699.3" y="987.0" width="10.1" height="218.4" fill="#6092c0"/><rect x="1713.2" y="940.2" width="10.1" height="265.2" fill="#6092c0"/><rect x="1727.0" y="1010.4" width="10.1" height="195.0" fill="#6092c0"/><rect x="1740.8" y="971.4" width="10.1" height="234.0" fill="#6092c0"/><rect x="1754.6" y="916.8" width="10.1" height="288.6" fill="#6092c0"/><rect x="1768.4" y="987.0" width="10.1" height="218.4" fill="#6092c0"/><rect x="1782.2" y="1010.4" width="10.1" height="195.0" fill="#6092c0"/><rect x="1796.0" y="1002.6" width="10.1" height="202.8" fill="#6092c0"/><rect x="1809.8" y="1010.4" width="10.1" height="195.0" fill="#6092c0"/><rect x="1823.6" y="987.0" width="10.1" height="218.4" fill="#6092c0"/><rect x="1837.4" y="979.2" width="10.1" height="226.2" fill="#6092c0"/><rect x="1851.3" y="1033.8" width="10.1" height="171.6" fill="#6092c0"/><rect x="1865.1" y="948.0" width="10.1" height="257.4" fill="#6092c0"/><rect x="1878.9" y="940.2" width="10.1" height="265.2" fill="#6092c0"/><rect x="1892.7" y="948.0" width="10.1" height="257.4" fill="#6092c0"/><rect x="1906.5" y="1002.6" width="10.1" height="202.8" fill="#6092c0"/><rect x="1920.3" y="940.2" width="10.1" height="265.2" fill="#6092c0"/><rect x="1934.1" y="971.4" width="10.1" height="234.0" fill="#6092c0"/><rect x="1947.9" y="940.2" width="10.1" height="265.2" fill="#6092c0"/><rect x="1961.7" y="1002.6" width="10.1" height="202.8" fill="#6092c0"/><rect x="1975.5" y="963.6" width="10.1" height="241.8" fill="#6092c0"/><rect x="1989.4" y="971.4" width="10.1" height="234.0" fill="#6092c0"/><line x1="1352.2" y1="1205.4" x2="2029" y2="1205.4" stroke="#eef0f3" stroke-width="1"/></svg>
<div class="t" style="left:1298.4px;top:1196.9px;width:40px;text-align:right;font-size:14.8px;line-height:17px;color:#69707d">0</div>
<div class="t" style="left:1298.4px;top:1157.9px;width:40px;text-align:right;font-size:14.8px;line-height:17px;color:#69707d">5</div>
<div class="t" style="left:1298.4px;top:1118.9px;width:40px;text-align:right;font-size:14.8px;line-height:17px;color:#69707d">10</div>
<div class="t" style="left:1298.4px;top:1079.9px;width:40px;text-align:right;font-size:14.8px;line-height:17px;color:#69707d">15</div>
<div class="t" style="left:1298.4px;top:1040.9px;width:40px;text-align:right;font-size:14.8px;line-height:17px;color:#69707d">20</div>
<div class="t" style="left:1298.4px;top:1001.9px;width:40px;text-align:right;font-size:14.8px;line-height:17px;color:#69707d">25</div>
<div class="t" style="left:1298.4px;top:962.9px;width:40px;text-align:right;font-size:14.8px;line-height:17px;color:#69707d">30</div>
<div class="t" style="left:1298.4px;top:923.9px;width:40px;text-align:right;font-size:14.8px;line-height:17px;color:#69707d">35</div>
<div class="t" style="left:1374.4px;top:1215.5px;width:80px;text-align:center;font-size:14.4px;line-height:17px;color:#69707d">02:00:00</div>
<div class="t" style="left:1457.3px;top:1215.5px;width:80px;text-align:center;font-size:14.4px;line-height:17px;color:#69707d">05:00:00</div>
<div class="t" style="left:1540.1px;top:1215.5px;width:80px;text-align:center;font-size:14.4px;line-height:17px;color:#69707d">08:00:00</div>
<div class="t" style="left:1623.0px;top:1215.5px;width:80px;text-align:center;font-size:14.4px;line-height:17px;color:#69707d">11:00:00</div>
<div class="t" style="left:1705.9px;top:1215.5px;width:80px;text-align:center;font-size:14.4px;line-height:17px;color:#69707d">14:00:00</div>
<div class="t" style="left:1788.8px;top:1215.5px;width:80px;text-align:center;font-size:14.4px;line-height:17px;color:#69707d">17:00:00</div>
<div class="t" style="left:1871.6px;top:1215.5px;width:80px;text-align:center;font-size:14.4px;line-height:17px;color:#69707d">20:00:00</div>
<div class="t" style="left:1954.5px;top:1215.5px;width:80px;text-align:center;font-size:14.4px;line-height:17px;color:#69707d">23:00:00</div>
<div class="t" style="left:1221.5px;top:1052px;width:130px;height:18px;font-size:16.3px;line-height:18px;color:#343741;font-weight:700;transform:rotate(-90deg);transform-origin:center;text-align:center">Total page views</div>
<div class="a" style="left:2062.7px;top:921.8px;width:10px;height:10px;border-radius:50%;background:#6092c0"></div>
<div class="t " style="left:2084.3px;top:919.1px;font-size:16.4px;line-height:16.4px;color:#343741;font-weight:400;">Overall</div>
<div class="panel" style="left:330px;top:1288px;width:918px;height:700px"></div>
<div class="t " style="left:354.5px;top:1317.0px;font-size:20.6px;line-height:20.6px;color:#1a1c21;font-weight:700;">Page load duration by region (avg.)</div>
<div class="a" style="left:354px;top:1354px;width:870px;height:532px;background:#bfd8f1;overflow:hidden">
<svg class="a" style="left:0;top:0" width="870" height="532"><path d="M-33.9,79.4 L-28.3,55.6 L-15.8,44.4 L-1.9,35.1 L10.7,40.2 L35.7,46.1 L52.5,54.8 L71.9,48.5 L88.7,51.7 L108.2,55.6 L116.5,60.2 L133.2,57.9 L147.1,62.4 L161.1,63.9 L169.4,58.7 L177.8,49.3 L188.9,58.7 L195.9,48.5 L205.6,54.8 L207.0,69.7 L194.5,73.2 L191.7,86.6 L180.6,96.1 L170.8,113.6 L170.8,120.7 L176.4,129.6 L187.5,133.1 L197.3,138.1 L204.8,139.0 L205.6,149.0 L212.6,155.8 L215.4,151.3 L214.0,140.5 L219.6,134.6 L219.6,121.7 L215.4,109.1 L217.3,100.3 L227.9,100.9 L234.9,107.9 L240.4,116.3 L244.6,121.2 L251.6,113.6 L254.4,121.7 L261.3,132.1 L265.5,137.1 L273.9,141.4 L278.0,151.3 L269.7,160.2 L255.8,161.5 L248.8,162.4 L240.4,170.9 L254.9,168.8 L253.0,177.0 L264.1,181.0 L257.2,185.0 L250.2,188.5 L248.8,183.0 L239.0,188.1 L236.8,193.4 L239.0,196.0 L229.3,199.3 L227.4,203.7 L223.7,206.2 L222.3,212.9 L223.7,217.7 L219.6,221.1 L214.0,225.2 L208.4,230.1 L207.9,235.9 L211.2,246.1 L210.1,251.0 L207.9,250.7 L204.2,243.9 L203.7,239.1 L200.1,235.9 L194.5,234.7 L187.5,234.7 L184.7,238.2 L180.6,238.5 L172.8,236.9 L166.6,240.4 L163.0,244.5 L162.5,250.1 L161.9,259.2 L165.2,267.3 L169.4,271.1 L176.4,270.8 L180.6,269.1 L182.2,264.3 L187.5,262.5 L191.7,262.2 L190.3,269.6 L188.9,274.0 L186.7,279.0 L194.5,278.7 L200.1,279.8 L202.0,282.7 L201.2,291.3 L203.4,296.4 L208.4,298.6 L212.6,296.7 L217.3,299.2 L218.7,301.5 L215.9,301.2 L211.2,303.1 L207.0,301.2 L201.5,299.5 L195.3,295.5 L190.3,287.0 L184.7,285.6 L179.2,284.4 L173.6,279.8 L166.6,279.3 L159.7,277.5 L151.3,274.0 L141.6,268.2 L139.9,260.7 L137.4,256.8 L131.8,250.7 L126.3,243.9 L120.7,237.5 L114.6,230.1 L119.3,239.1 L122.1,247.0 L127.6,254.7 L129.0,257.1 L124.9,253.8 L121.5,248.5 L116.0,242.3 L113.7,236.6 L109.0,230.1 L107.3,226.2 L104.0,222.8 L98.1,220.8 L94.5,214.3 L92.0,209.8 L89.2,203.7 L87.8,196.4 L87.3,188.8 L88.7,179.0 L86.7,169.2 L91.4,167.9 L87.3,162.4 L78.9,158.9 L77.5,153.6 L70.6,141.9 L66.4,132.1 L58.0,121.7 L51.1,120.1 L44.1,115.2 L34.4,113.6 L26.0,109.1 L17.6,114.7 L11.2,116.3 L6.5,118.0 L-1.9,128.5 L-7.4,134.6 L-15.8,137.1 L-21.3,140.5 L-11.6,131.1 L-4.6,122.8 L-16.6,121.2 L-17.2,114.1 L-25.0,110.8 L-26.9,100.3 L-22.7,93.0 L-14.4,86.6 L-21.3,86.0 L-29.7,85.3 Z" fill="#ccd5e3" stroke="#1f2126" stroke-width="1.3" stroke-linejoin="round" /><path d="M87.6,7.2 L96.3,4.8 L107.9,8.2 L114.6,15.9 L107.9,19.3 L101.1,28.0 L98.2,33.8 L93.4,38.1 L84.7,30.9 L90.5,19.3 Z" fill="#ccd5e3" stroke="#1f2126" stroke-width="1.2" stroke-linejoin="round"/><path d="M104.0,24.1 L116.5,16.9 L118.5,22.2 L128.1,22.2 L131.0,27.0 L134.9,17.4 L141.6,13.0 L143.6,18.3 L142.6,25.1 L145.5,38.6 L153.2,45.4 L152.3,54.1 L137.8,56.0 L130.1,57.9 L119.4,58.9 L117.5,54.1 L108.8,49.2 L107.9,44.4 L124.3,44.4 L116.5,40.5 L106.9,38.6 L105.0,33.8 Z" fill="#ccd5e3" stroke="#1f2126" stroke-width="1.2" stroke-linejoin="round"/><path d="M149.4,23.2 L157.1,11.6 L162.9,10.6 L166.7,24.1 L164.8,30.9 L160.9,35.7 L153.2,29.0 Z" fill="#ccd5e3" stroke="#1f2126" stroke-width="1.2" stroke-linejoin="round"/><path d="M167.7,33.8 L174.5,31.9 L178.3,41.5 L176.4,50.2 L168.7,51.2 L165.8,43.4 Z" fill="#ccd5e3" stroke="#1f2126" stroke-width="1.2" stroke-linejoin="round"/><path d="M168.7,12.5 L173.5,9.2 L184.1,11.6 L179.3,23.2 L172.5,29.0 L169.6,22.2 Z" fill="#ccd5e3" stroke="#1f2126" stroke-width="1.2" stroke-linejoin="round"/><path d="M184.9,26.8 L187.6,16.1 L195.7,12.5 L199.2,15.2 L195.7,23.2 L196.6,35.7 L199.2,38.4 L191.2,38.4 L185.8,34.9 Z" fill="#ccd5e3" stroke="#1f2126" stroke-width="1.2" stroke-linejoin="round"/><path d="M185.3,21.7 L198.0,14.0 L208.5,26.1 L221.5,42.0 L246.1,60.8 L263.5,72.4 L257.7,86.9 L254.8,104.2 L246.1,99.9 L234.5,101.3 L225.9,86.9 L217.2,81.1 L205.6,66.6 L188.2,60.8 L188.2,47.8 L186.8,36.2 Z" fill="#ccd5e3" stroke="#1f2126" stroke-width="1.2" stroke-linejoin="round"/><path d="M116.5,-4.0 L174.5,-4.0 L174.5,3.5 L146.0,4.8 L126.0,4.5 L116.5,3.0 Z" fill="#ccd5e3" stroke="#1f2126" stroke-width="1.2" stroke-linejoin="round"/><path d="M178.3,-4.0 L214.0,-4.0 L213.0,4.5 L196.0,5.8 L181.0,4.8 Z" fill="#ccd5e3" stroke="#1f2126" stroke-width="1.2" stroke-linejoin="round"/><path d="M268.8,172.5 L271.1,166.7 L275.3,159.3 L279.4,155.4 L279.4,162.4 L285.0,165.4 L287.0,170.9 L286.4,176.2 L279.4,175.4 L276.6,172.9 Z" fill="#ccd5e3" stroke="#1f2126" stroke-width="1.3" stroke-linejoin="round" /><path d="M230.7,-35.6 L272.5,-10.8 L280.8,38.5 L285.0,69.7 L292.0,89.8 L297.5,105.0 L311.5,114.7 L317.0,105.0 L322.6,83.4 L333.7,78.7 L344.9,62.4 L364.4,50.9 L372.7,38.5 L374.1,10.7 L383.9,-22.7 L378.3,-64.8 L322.6,-121.9 L266.9,-100.6 Z" fill="#fdfcfb" stroke="#a9cbef" stroke-width="2" stroke-linejoin="round" /><path d="M361.6,50.1 L372.7,38.5 L374.1,10.7 L383.9,-22.7 L378.3,-64.8 L361.6,-64.8 L367.2,10.7 L361.6,38.5 Z" fill="#f3ede6" stroke="none" stroke-width="0" stroke-linejoin="round" /><path d="M367.2,80.0 L372.7,73.9 L383.9,75.3 L392.2,73.2 L396.4,82.0 L392.2,87.9 L382.5,93.6 L371.3,91.1 Z" fill="#f8f5f0" stroke="#aecdef" stroke-width="1.2" stroke-linejoin="round" /><path d="M107.9,227.8 L114.6,227.1 L124.9,231.7 L132.7,231.7 L137.7,230.4 L143.0,237.5 L147.1,239.5 L151.6,236.6 L156.9,244.5 L163.3,248.9 L161.9,259.2 L165.2,267.3 L169.4,271.1 L176.4,270.8 L180.6,269.1 L182.2,264.3 L187.5,262.5 L191.7,262.2 L190.3,269.6 L188.1,271.1 L185.9,273.2 L180.6,273.2 L182.0,278.1 L177.2,280.7 L177.8,282.7 L173.6,279.8 L166.6,279.3 L159.7,277.5 L151.3,274.0 L141.6,268.2 L139.9,260.7 L137.4,256.8 L131.8,250.7 L126.3,243.9 L120.7,237.5 L114.6,230.1 L119.3,239.1 L122.1,247.0 L127.6,254.7 L129.0,257.1 L124.9,253.8 L121.5,248.5 L116.0,242.3 L113.7,236.6 L109.0,230.1 Z" fill="#bfcde0" stroke="#1f2126" stroke-width="1.3" stroke-linejoin="round" /><path d="M177.2,280.7 L182.0,278.1 L180.6,273.2 L185.9,273.2 L188.1,271.1 L190.3,269.6 L188.9,274.0 L186.7,279.0 L194.5,278.7 L200.1,279.8 L202.0,282.7 L201.2,291.3 L203.4,296.4 L208.4,298.6 L212.6,296.7 L217.3,299.2 L218.7,301.5 L215.9,301.2 L211.2,303.1 L207.0,301.2 L201.5,299.5 L195.3,295.5 L190.3,287.0 L184.7,285.6 L179.2,284.4 L177.8,282.7 Z" fill="#f8f5f0" stroke="#bdbbc6" stroke-width="0.8" stroke-linejoin="round" /><path d="M91.4,166.7 L169.4,166.7 L184.7,170.9 L198.7,177.0 L204.2,181.8 L204.2,192.6 L214.0,191.5 L220.9,186.9 L226.0,183.0 L234.9,183.0 L239.0,177.0 L244.6,173.8 L246.0,181.0" fill="none" stroke="#15161a" stroke-width="1.6" stroke-linejoin="round"/><path d="M41.3,111.9 L41.3,50.1" fill="none" stroke="#15161a" stroke-width="0.9" stroke-linejoin="round"/><path d="M197.6,261.0 L205.6,257.4 L211.2,257.7 L219.6,261.6 L227.4,266.1 L218.2,267.0 L215.4,262.2 L208.4,261.3 L202.8,260.7 Z" fill="#f8f5f0" stroke="#aecdef" stroke-width="1" stroke-linejoin="round" /><path d="M226.5,271.4 L231.3,267.0 L239.0,267.6 L243.5,270.8 L236.3,273.2 Z" fill="#f8f5f0" stroke="#aecdef" stroke-width="1" stroke-linejoin="round" /><path d="M246.8,271.1 L251.3,271.4 L250.7,272.6 L246.8,272.6 Z" fill="#f8f5f0" stroke="#aecdef" stroke-width="1" stroke-linejoin="round" /><path d="M218.7,301.5 L220.9,297.5 L223.7,293.6 L230.7,290.4 L234.9,288.7 L235.7,292.7 L239.6,291.3 L244.6,293.8 L255.8,293.8 L261.9,293.6 L264.1,296.9 L266.9,299.8 L271.1,304.0 L275.3,306.8 L280.8,307.1 L289.2,309.6 L292.0,312.4 L294.8,318.5 L293.4,322.1 L298.9,325.4 L308.7,327.7 L319.8,331.6 L326.8,333.8 L335.7,338.8 L337.1,344.4 L336.5,348.6 L331.0,354.3 L325.9,361.4 L325.4,373.0 L324.0,378.8 L321.2,385.7 L317.0,389.3 L310.1,390.2 L303.1,393.8 L298.9,398.5 L298.4,406.3 L294.8,411.1 L292.0,415.9 L287.8,422.5 L284.7,425.9 L280.8,427.6 L276.6,432.0 L273.9,437.9 L269.7,440.8 L260.8,441.5 L261.3,446.9 L253.0,448.8 L254.4,454.4 L253.0,464.0 L246.0,470.0 L250.7,475.3 L245.2,482.4 L241.8,490.3 L243.5,495.3 L239.0,500.3 L247.4,505.1 L252.1,507.5 L244.6,509.9 L234.9,507.5 L227.9,498.0 L223.7,484.6 L223.7,472.0 L227.9,464.0 L229.3,454.4 L228.7,441.5 L230.1,434.4 L233.5,420.8 L234.9,411.1 L235.4,401.6 L237.7,390.8 L238.5,378.8 L234.9,372.4 L224.3,366.6 L220.9,361.4 L216.8,352.9 L212.6,345.3 L207.9,338.8 L210.4,333.2 L211.2,329.1 L209.0,324.9 L211.2,321.3 L214.8,316.5 L218.2,312.4 L218.7,305.4 Z" fill="#d4dce8" stroke="#1f2126" stroke-width="1.3" stroke-linejoin="round" /><path d="M232.1,290.4 L235.7,292.7 L239.6,291.3 L244.6,293.8 L255.8,293.8 L261.9,293.6 L264.1,296.9 L266.9,299.8 L271.1,304.0 L275.3,306.8 L280.8,307.1 L289.2,309.6 L292.0,312.4 L290.0,317.4 L283.6,317.1 L276.6,318.2 L271.1,319.9 L266.9,319.3 L262.7,319.0 L255.8,319.9 L251.6,321.6 L247.4,319.3 L245.2,311.0 L246.0,306.2 L239.0,304.0 L232.9,303.1 L231.0,298.4 L229.9,297.8 L231.3,292.7 Z" fill="#f8f5f0" stroke="#bdbbc6" stroke-width="0.8" stroke-linejoin="round" /><path d="M218.7,301.5 L220.9,297.5 L223.7,293.6 L230.7,290.4 L232.1,290.4 L231.3,292.7 L229.9,297.8 L231.0,298.4 L232.9,303.1 L239.0,304.0 L246.0,306.2 L245.2,311.0 L247.4,319.3 L239.3,335.2 L238.2,326.3 L230.7,327.7 L224.3,323.8 L219.6,321.3 L214.5,319.3 L214.8,316.5 L218.2,312.4 L218.7,305.4 Z" fill="#b8c9df" stroke="#1f2126" stroke-width="1.3" stroke-linejoin="round" /><path d="M214.5,319.3 L219.6,321.3 L224.3,323.8 L230.7,327.7 L238.2,326.3 L239.3,335.2 L231.3,337.4 L229.3,343.0 L232.1,350.1 L237.7,350.1 L237.7,354.3 L241.8,354.3 L242.7,358.6 L240.4,367.2 L241.3,372.4 L237.9,375.3 L234.9,372.4 L224.3,366.6 L220.9,361.4 L216.8,352.9 L212.6,345.3 L207.9,338.8 L210.4,333.2 L211.2,329.1 L209.0,324.9 L211.2,321.3 Z" fill="#f8f5f0" stroke="#bdbbc6" stroke-width="0.8" stroke-linejoin="round" /><path d="M241.8,354.3 L243.2,354.3 L250.2,350.9 L253.0,352.9 L259.9,361.4 L265.5,362.3 L266.9,369.5 L271.6,369.5 L272.5,380.3 L266.9,387.2 L259.1,386.3 L251.6,386.6 L244.9,387.8 L242.4,381.8 L240.2,373.0 L240.4,367.2 L242.7,358.6 Z" fill="#d0d9e6" stroke="#1f2126" stroke-width="1.3" stroke-linejoin="round" /><path d="M272.5,380.3 L271.9,386.3 L275.3,387.2 L279.4,392.3 L281.9,397.2 L273.6,402.8 L270.8,402.2 L273.3,396.9 L266.9,392.3 L260.5,387.2 L266.9,387.2 Z" fill="#f8f5f0" stroke="#15161a" stroke-width="0.8" stroke-linejoin="round" /><path d="M238.5,378.8 L242.4,381.8 L244.9,387.8 L251.6,386.6 L259.1,386.3 L260.5,387.2 L266.9,392.3 L273.3,396.9 L270.8,402.2 L284.2,402.2 L279.2,404.7 L271.4,411.4 L271.9,420.8 L273.9,437.9 L269.7,440.8 L260.8,441.5 L261.3,446.9 L253.0,448.8 L254.4,454.4 L253.0,464.0 L246.0,470.0 L250.7,475.3 L245.2,482.4 L241.8,490.3 L243.5,495.3 L239.0,500.3 L247.4,505.1 L252.1,507.5 L244.6,509.9 L234.9,507.5 L227.9,498.0 L223.7,484.6 L223.7,472.0 L227.9,464.0 L229.3,454.4 L228.7,441.5 L230.1,434.4 L233.5,420.8 L234.9,411.1 L235.4,401.6 L237.7,390.8 Z" fill="#c8d3e3" stroke="#1f2126" stroke-width="1.3" stroke-linejoin="round" /><path d="M241.8,491.2 L234.0,480.3 L232.1,468.0 L234.9,456.3 L234.0,443.3 L237.7,431.0 L239.3,417.6 L240.4,404.7 L243.8,393.8 L244.9,387.8" fill="none" stroke="#15161a" stroke-width="0.9" stroke-linejoin="round"/><path d="M271.4,411.4 L279.2,413.6 L285.3,423.2 L282.2,426.9 L276.6,426.9 L271.9,420.8 Z" fill="#cbd5e3" stroke="#1f2126" stroke-width="1.3" stroke-linejoin="round" /><path d="M386.4,263.7 L388.0,268.2 L388.3,276.9 L385.3,282.1 L387.5,288.4 L392.2,292.7 L396.4,296.4 L399.2,301.7 L403.4,304.5 L408.9,309.6 L413.1,311.5 L421.5,309.0 L428.4,310.1 L436.8,307.1 L442.4,305.9 L447.9,307.9 L452.1,311.5 L457.7,310.7 L460.7,313.8 L460.5,319.3 L459.6,324.9 L464.1,331.8 L467.4,337.4 L470.2,343.0 L471.6,353.7 L468.8,361.4 L466.9,371.5 L471.3,383.3 L474.4,389.3 L476.3,401.6 L480.0,407.9 L484.1,415.9 L485.2,424.2 L489.7,426.9 L496.7,424.2 L505.0,424.2 L509.2,422.5 L514.8,417.6 L520.3,410.4 L524.8,406.3 L525.1,398.5 L531.5,393.8 L532.9,386.3 L530.9,379.4 L535.7,375.9 L544.0,370.1 L547.3,365.7 L546.8,353.4 L543.7,345.8 L542.6,340.8 L544.6,336.0 L547.6,329.9 L551.0,325.7 L556.0,319.3 L563.5,314.3 L569.1,307.3 L573.2,301.2 L576.0,294.1 L576.9,290.4 L569.1,292.1 L559.3,294.1 L554.6,291.3 L553.2,287.9 L549.6,284.2 L544.0,279.8 L541.2,272.6 L537.9,263.7 L536.5,259.8 L532.9,255.3 L531.5,250.1 L527.3,243.2 L524.8,236.6 L524.0,231.7 L520.3,231.1 L514.8,233.0 L509.2,231.7 L503.6,230.1 L498.1,227.8 L491.1,229.4 L489.1,234.0 L484.1,233.4 L477.2,229.4 L470.2,226.8 L464.6,224.5 L462.7,221.8 L464.6,218.8 L463.2,213.3 L460.5,211.5 L453.5,212.6 L445.1,212.9 L436.8,214.3 L429.8,218.8 L427.0,219.1 L417.6,216.7 L415.9,221.1 L411.7,224.8 L407.3,234.3 L403.4,240.7 L398.1,242.9 L393.6,248.5 L389.4,255.0 Z" fill="#f8f5f0" stroke="#aecdef" stroke-width="1.5" stroke-linejoin="round" /><path d="M386.7,263.7 L420.1,263.7 L434.0,278.4 L445.1,285.6 L473.0,287.0 L475.8,301.2 L500.8,299.8 L509.2,309.6 L520.3,313.8 L531.5,309.6" fill="none" stroke="#c4c2cc" stroke-width="0.9" stroke-linejoin="round"/><path d="M420.1,251.6 L420.1,278.4 L403.4,288.4" fill="none" stroke="#c4c2cc" stroke-width="0.9" stroke-linejoin="round"/><path d="M473.0,287.0 L478.6,263.7 L500.8,266.7 L500.8,299.8" fill="none" stroke="#c4c2cc" stroke-width="0.9" stroke-linejoin="round"/><path d="M500.8,266.7 L503.6,260.7 L537.0,260.7" fill="none" stroke="#c4c2cc" stroke-width="0.9" stroke-linejoin="round"/><path d="M460.5,319.3 L470.2,317.9 L478.6,319.3 L484.1,313.8 L509.2,309.6" fill="none" stroke="#c4c2cc" stroke-width="0.9" stroke-linejoin="round"/><path d="M467.4,337.4 L481.3,345.8 L495.3,354.3 L500.8,360.0 L517.5,345.8 L531.5,354.3" fill="none" stroke="#c4c2cc" stroke-width="0.9" stroke-linejoin="round"/><path d="M525.9,312.4 L531.5,326.3 L517.5,326.3 L517.5,345.8" fill="none" stroke="#c4c2cc" stroke-width="0.9" stroke-linejoin="round"/><path d="M495.3,354.3 L495.3,374.4 L517.5,365.7 L531.5,362.8" fill="none" stroke="#c4c2cc" stroke-width="0.9" stroke-linejoin="round"/><path d="M442.4,305.9 L442.4,289.9 L434.0,292.7 L420.1,295.5 L414.5,311.0" fill="none" stroke="#c4c2cc" stroke-width="0.9" stroke-linejoin="round"/><path d="M534.3,281.3 L539.8,301.2 L551.0,315.2 L563.5,309.6 L567.7,301.2" fill="none" stroke="#c4c2cc" stroke-width="0.9" stroke-linejoin="round"/><path d="M417.6,216.7 L427.9,219.1 L429.3,221.1 L429.8,227.8 L424.3,231.1 L420.1,235.9 L409.8,240.1 L397.2,243.2 L386.4,263.7 L389.4,255.0 L393.6,248.5 L398.1,242.9 L403.4,240.7 L407.3,234.3 L411.7,224.8 L415.9,221.1 Z" fill="#cdd6e3" stroke="#1f2126" stroke-width="1.3" stroke-linejoin="round" /><path d="M427.9,219.1 L436.8,214.3 L445.1,212.9 L458.0,212.9 L457.4,221.1 L454.9,225.2 L460.5,235.9 L461.3,247.0 L467.1,256.2 L454.9,264.3 L445.7,269.1 L442.9,269.6 L420.6,251.6 L409.8,244.5 L409.8,240.1 L420.1,235.9 L424.3,231.1 L429.8,227.8 L429.3,221.1 Z" fill="#d6dce8" stroke="#1f2126" stroke-width="1.3" stroke-linejoin="round" /><path d="M503.6,230.8 L514.8,233.0 L524.0,231.7 L529.2,231.7 L531.2,237.5 L527.3,243.2 L532.9,255.3 L536.8,260.7 L503.6,260.7 L503.6,237.5 Z" fill="#d5dce8" stroke="#1f2126" stroke-width="1.3" stroke-linejoin="round" /><path d="M466.9,371.5 L471.3,383.3 L474.4,389.3 L476.3,401.6 L480.0,406.6 L489.7,406.0 L489.7,386.3 L492.5,386.3 L492.5,375.0 L498.9,373.0 L504.2,373.8 L498.6,372.4 L491.9,374.4 L473.0,372.7 Z" fill="#bacadf" stroke="#1f2126" stroke-width="1.3" stroke-linejoin="round" /><path d="M480.0,406.6 L484.1,415.9 L485.2,424.2 L489.7,426.9 L496.7,424.2 L505.0,424.2 L509.2,422.5 L514.8,417.6 L520.3,410.4 L524.8,406.3 L523.4,400.0 L522.8,396.9 L521.2,387.5 L515.9,386.6 L509.2,392.3 L505.3,397.2 L498.1,396.3 L489.7,394.8 L489.7,406.0 Z" fill="#cbd6e4" stroke="#1f2126" stroke-width="1.3" stroke-linejoin="round" /><path d="M525.1,398.5 L531.5,393.8 L532.9,386.3 L530.9,379.4 L535.7,375.9 L544.0,370.1 L547.3,365.7 L546.8,353.4 L539.8,355.1 L533.7,355.7 L530.4,356.0 L532.0,363.4 L530.1,364.3 L526.2,371.5 L525.6,376.8 L524.5,384.8 L521.2,387.5 L523.1,396.9 Z" fill="#d1d9e6" stroke="#1f2126" stroke-width="1.3" stroke-linejoin="round" /><path d="M528.7,311.8 L534.0,310.7 L539.8,313.5 L544.3,314.0 L548.2,312.4 L550.7,312.6 L548.2,328.0 L549.6,328.2 L546.0,331.3 L543.2,336.6 L539.0,332.1 L528.4,326.3 L528.7,320.7 L531.5,318.2 L529.8,310.7 Z" fill="#e9dfd1" stroke="#1f2126" stroke-width="1.3" stroke-linejoin="round" /><path d="M571.3,357.1 L574.4,366.6 L572.7,371.5 L569.1,381.8 L565.5,394.8 L559.9,397.2 L556.0,394.8 L554.6,386.3 L557.4,380.3 L556.5,373.0 L557.9,369.2 L563.5,367.2 L566.3,362.8 L569.1,360.8 Z" fill="#f8f5f0" stroke="#aecdef" stroke-width="1.5" stroke-linejoin="round" /><path d="M408.1,190.0 L409.2,196.4 L407.5,205.5 L409.5,212.6 L413.1,211.9 L416.5,213.3 L418.7,216.0 L421.5,213.6 L428.4,213.6 L432.6,210.5 L434.0,206.2 L433.2,203.7 L436.5,198.2 L442.9,194.5 L442.4,190.0 L446.5,189.2 L452.1,190.4 L456.3,187.7 L461.9,186.9 L463.2,191.1 L468.0,195.6 L473.0,199.0 L477.7,202.3 L478.6,209.1 L481.3,205.5 L481.9,200.4 L485.5,201.2 L484.1,199.0 L478.6,195.3 L474.4,193.4 L471.6,188.5 L468.3,185.0 L468.5,181.4 L472.2,180.2 L474.4,182.2 L476.3,186.1 L482.7,190.7 L488.0,195.3 L488.0,200.8 L490.3,204.1 L493.0,209.1 L494.4,213.3 L498.1,214.3 L498.1,209.1 L500.8,208.3 L498.1,203.7 L496.9,200.8 L500.3,199.3 L506.4,199.0 L507.2,201.9 L507.0,204.1 L509.2,208.0 L510.6,212.6 L513.4,213.6 L518.9,215.0 L525.3,215.7 L530.4,213.3 L534.8,213.9 L533.7,216.7 L534.0,220.1 L531.8,226.2 L529.5,231.7 L531.2,237.5 L534.8,242.3 L537.6,251.6 L543.2,262.2 L546.8,269.6 L552.4,276.9 L553.8,282.7 L555.1,287.9 L559.3,287.6 L569.4,284.2 L579.4,279.6 L588.6,274.0 L595.0,269.6 L596.9,265.2 L600.5,259.8 L597.8,256.2 L593.6,255.0 L590.8,251.9 L591.1,247.6 L588.6,250.1 L584.4,254.1 L577.7,253.8 L576.0,248.5 L573.5,248.9 L571.9,245.4 L569.1,241.4 L567.4,236.3 L570.5,235.0 L575.5,239.1 L580.2,243.9 L586.3,247.0 L593.6,249.2 L599.7,250.4 L605.3,251.3 L613.6,251.0 L619.2,250.4 L622.0,254.7 L625.6,256.2 L629.0,259.2 L626.7,259.8 L630.3,263.7 L635.9,262.8 L636.7,268.8 L638.4,276.9 L641.5,282.7 L642.9,288.4 L645.7,295.5 L649.8,301.2 L651.8,298.6 L654.9,294.7 L656.8,291.3 L657.6,285.6 L657.1,280.4 L662.4,276.9 L668.5,271.7 L674.9,267.0 L676.3,262.2 L680.5,261.6 L684.7,260.7 L689.7,259.2 L691.6,265.2 L694.4,268.2 L696.6,278.1 L700.0,279.0 L705.5,276.7 L706.4,281.9 L708.3,288.4 L708.3,295.5 L707.8,301.2 L713.3,305.4 L713.9,312.4 L716.1,315.7 L722.2,319.9 L724.2,319.0 L722.0,312.9 L721.4,308.2 L715.3,304.3 L713.9,302.6 L710.3,297.8 L712.2,288.7 L714.7,285.6 L718.9,289.3 L720.3,289.0 L724.5,294.1 L726.4,299.5 L731.2,296.9 L731.4,294.4 L737.0,291.9 L738.4,286.2 L737.0,280.4 L732.8,276.1 L728.4,270.8 L730.9,265.8 L734.8,262.2 L739.2,262.2 L741.7,265.8 L743.1,262.2 L750.1,259.8 L754.3,258.3 L759.8,256.2 L766.8,250.1 L768.2,245.4 L772.4,239.8 L773.8,235.9 L771.0,231.1 L769.6,226.2 L766.3,220.5 L768.2,214.3 L775.2,211.9 L771.0,209.8 L764.9,210.8 L762.6,207.3 L761.8,204.8 L766.0,202.6 L771.0,199.0 L773.8,200.1 L771.8,203.7 L775.2,201.9 L780.2,202.6 L783.0,204.8 L785.7,210.1 L786.9,217.7 L786.3,221.1 L789.1,220.5 L793.3,219.4 L794.4,215.0 L794.1,210.8 L791.9,207.3 L789.4,202.6 L795.2,198.6 L796.0,193.4 L799.7,191.5 L804.4,191.5 L811.4,187.3 L816.4,181.0 L819.7,175.0 L825.0,168.8 L825.3,160.2 L827.8,149.0 L823.3,143.4 L816.7,144.3 L814.7,141.4 L821.1,129.6 L828.1,121.2 L832.3,117.4 L840.6,117.4 L849.0,115.8 L858.2,119.1 L865.7,117.4 L870.7,106.2 L879.6,103.3 L877.7,107.9 L870.4,126.0 L869.0,134.6 L867.6,144.3 L869.9,157.1 L874.9,153.6 L879.6,148.1 L885.2,140.5 L884.6,133.6 L888.8,126.0 L886.6,122.8 L892.1,114.7 L896.3,111.9 L908.3,113.6 L914.4,107.9 L928.3,99.1 L932.5,100.3 L935.3,83.4 L935.3,54.8 L907.5,46.9 L893.5,48.5 L879.6,41.9 L865.7,38.5 L851.8,34.2 L832.3,23.3 L818.3,33.3 L801.6,34.2 L791.9,23.3 L787.7,15.7 L771.0,21.5 L759.8,15.7 L748.7,12.7 L740.3,10.7 L726.4,-29.0 L712.5,-49.6 L684.7,-22.7 L676.3,5.6 L658.2,15.7 L658.2,25.2 L645.7,28.0 L635.9,23.3 L635.9,38.5 L637.3,54.8 L626.2,66.1 L617.8,50.9 L620.6,38.5 L626.2,22.4 L609.5,48.5 L601.1,57.1 L587.2,60.9 L581.6,56.4 L567.7,64.6 L557.1,58.7 L556.5,75.3 L552.4,73.2 L544.8,76.7 L539.8,87.9 L535.7,84.7 L537.6,78.0 L548.2,73.2 L546.0,63.9 L531.5,53.3 L523.1,47.7 L513.4,39.4 L502.2,37.7 L489.7,46.9 L480.0,57.9 L474.4,66.1 L468.8,78.0 L463.2,89.8 L457.7,94.2 L449.3,102.1 L447.9,116.3 L449.9,121.7 L453.5,124.4 L457.1,123.3 L463.2,117.4 L465.2,121.7 L469.4,133.6 L469.9,137.6 L473.5,137.6 L478.6,133.6 L480.0,127.0 L480.5,121.7 L485.5,116.9 L482.2,109.6 L482.2,99.1 L492.5,86.6 L493.9,80.0 L500.8,78.0 L504.5,82.7 L495.3,97.3 L493.0,107.9 L497.8,114.7 L506.4,111.3 L516.2,112.5 L512.0,116.3 L499.4,117.4 L499.7,124.4 L502.0,127.0 L494.2,127.5 L492.5,134.6 L493.0,138.5 L489.4,141.4 L485.5,140.5 L480.0,141.4 L473.5,144.8 L468.3,143.4 L464.6,144.3 L464.1,139.5 L461.9,139.5 L463.0,132.1 L460.5,128.5 L456.6,130.6 L456.6,137.1 L458.2,144.3 L453.5,146.2 L447.9,147.6 L446.0,152.6 L443.7,156.2 L439.0,158.5 L438.2,161.5 L434.0,164.1 L430.7,165.4 L428.7,163.7 L430.1,167.9 L425.6,167.5 L420.9,169.2 L422.3,171.7 L427.9,174.2 L430.4,179.0 L430.7,184.6 L429.0,189.2 L421.5,189.2 L413.1,188.1 Z" fill="#c9d3e2" stroke="#1f2126" stroke-width="1.3" stroke-linejoin="round" /><path d="M510.6,192.6 L512.0,188.8 L514.2,185.0 L517.5,179.8 L521.7,176.6 L527.3,179.0 L525.9,182.2 L532.9,181.8 L535.7,181.8 L539.8,174.2 L543.5,175.0 L538.4,179.0 L539.3,183.8 L544.0,188.8 L549.9,196.0 L545.4,198.2 L535.7,197.1 L531.5,194.5 L526.7,194.5 L521.2,197.5 L514.8,197.5 Z" fill="#bfd8f1" stroke="#1f2126" stroke-width="1.3" stroke-linejoin="round" /><path d="M564.9,183.8 L571.9,177.0 L577.4,175.0 L582.4,177.8 L581.6,183.0 L576.0,185.0 L577.4,190.7 L581.0,195.3 L581.6,201.9 L583.6,207.3 L584.1,212.6 L576.0,213.3 L570.5,210.5 L571.9,201.9 L573.2,199.3 L569.9,195.6 L566.3,190.7 Z" fill="#bfd8f1" stroke="#1f2126" stroke-width="1.3" stroke-linejoin="round" /><path d="M507.8,195.6 L512.0,197.9 L516.2,197.5 L521.7,197.1 L527.3,194.5 L531.5,194.5 L535.7,197.1 L541.2,198.6 L546.8,198.2 L549.9,196.4 L554.9,197.5 L555.7,201.5 L558.8,203.0 L557.1,211.5 L552.1,212.2 L546.8,212.2 L539.8,213.3 L534.8,213.9 L530.4,213.3 L525.3,215.7 L518.9,215.0 L513.4,213.6 L510.6,212.6 L509.2,208.0 L507.0,204.1 L507.2,201.9 L506.4,199.0 Z" fill="#f1d2ad" stroke="#15161a" stroke-width="0.9" stroke-linejoin="round" /><path d="M499.4,144.8 L505.0,142.9 L508.6,138.1 L512.5,133.6 L520.1,136.6 L525.1,147.6 L522.0,153.1 L519.2,156.2 L503.6,154.0 L499.7,155.8 Z" fill="#f8f5f0" stroke="#15161a" stroke-width="0.9" stroke-linejoin="round" /><path d="M490.5,178.6 L494.4,172.1 L503.3,171.7 L509.8,170.0 L512.5,177.4 L513.9,182.2 L516.4,183.0 L513.7,188.1 L509.8,186.5 L503.6,188.1 L497.2,186.1 L493.9,183.8 Z" fill="#e2ddd6" stroke="#15161a" stroke-width="0.9" stroke-linejoin="round" /><path d="M479.1,175.8 L483.0,171.7 L486.9,170.9 L495.5,169.2 L497.2,171.3 L492.8,178.2 L486.4,179.4 L481.3,179.0 Z" fill="#f0d9bd" stroke="#15161a" stroke-width="0.9" stroke-linejoin="round" /><path d="M473.3,145.3 L485.8,141.9 L497.5,142.9 L499.7,150.8 L500.8,158.9 L496.9,166.3 L486.9,164.6 L475.8,158.9 Z" fill="#bfcfe3" stroke="#15161a" stroke-width="0.9" stroke-linejoin="round" /><path d="M495.5,169.2 L499.7,155.8 L503.6,154.0 L519.2,156.2 L522.0,153.1 L528.7,152.6 L532.9,160.7 L540.4,162.8 L545.4,164.6 L544.6,171.7 L540.4,174.6 L538.4,177.0 L532.9,181.8 L525.9,182.2 L527.3,179.0 L521.7,176.6 L517.5,179.8 L516.4,181.8 L512.5,177.4 L509.8,170.0 L503.3,171.7 L497.2,171.3 Z" fill="#d0d9e6" stroke="#15161a" stroke-width="0.9" stroke-linejoin="round" /><path d="M542.1,224.8 L548.2,221.5 L549.0,212.2 L552.1,212.2 L557.1,211.5 L560.7,216.4 L562.1,226.2 L566.3,232.7 L567.7,235.9 L564.9,238.8 L558.5,238.5 L551.0,232.4 L542.6,228.8 Z" fill="#f8f5f0" stroke="#bdbbc6" stroke-width="0.8" stroke-linejoin="round" /><path d="M581.0,195.6 L581.6,201.9 L583.6,207.3 L584.1,212.6 L588.6,209.1 L593.6,208.3 L599.2,210.8 L602.8,213.9 L604.4,217.7 L602.5,224.5 L603.6,231.1 L606.1,232.7 L603.6,236.6 L608.1,237.9 L610.3,244.8 L608.9,247.3 L605.6,251.0 L613.6,251.0 L619.2,250.4 L622.0,254.7 L625.6,256.2 L630.3,254.1 L632.3,246.1 L637.3,238.5 L641.5,233.4 L641.5,227.8 L648.4,217.7 L642.6,211.9 L639.3,204.1 L637.9,201.9 L642.3,200.4 L647.1,200.4 L657.4,194.1 L654.0,191.5 L640.6,189.6 L633.1,193.4 L630.3,192.6 L626.2,196.8 L619.2,191.5 L617.3,188.5 L606.7,188.8 L596.9,180.6 L590.0,183.0 L589.7,197.1 Z" fill="#f8f5f0" stroke="#bdbbc6" stroke-width="0.8" stroke-linejoin="round" /><path d="M678.5,165.8 L686.6,161.1 L696.6,159.8 L708.3,153.1 L718.1,155.8 L729.2,161.1 L736.2,165.4 L752.6,161.1 L759.0,163.3 L755.7,170.5 L760.7,172.1 L767.4,176.2 L757.1,180.2 L745.4,182.6 L743.1,189.2 L729.5,194.1 L715.3,192.3 L702.2,191.9 L699.4,186.1 L694.4,183.0 L687.2,181.8 L686.3,172.9 L681.3,170.5 Z" fill="#f8f5f0" stroke="#15161a" stroke-width="0.9" stroke-linejoin="round" /><path d="M564.9,165.8 L569.4,159.8 L576.0,154.5 L589.1,159.8 L596.9,158.0 L604.7,158.9 L603.3,146.7 L615.0,141.4 L626.2,138.1 L638.4,146.7 L647.1,144.8 L651.2,151.3 L656.8,158.9 L666.3,158.0 L673.0,163.3 L677.1,165.8 L672.1,174.2 L665.2,175.0 L663.2,181.0 L657.4,183.0 L657.4,194.1 L654.0,191.5 L640.6,189.6 L633.1,193.4 L630.3,192.6 L626.2,196.8 L619.2,191.5 L617.3,188.5 L606.7,188.8 L596.9,180.6 L590.0,183.0 L589.7,197.1 L581.0,195.6 L580.8,192.6 L576.9,190.0 L574.1,184.6 L576.9,181.8 L581.6,175.8 L576.6,175.0 L570.7,177.4 Z" fill="#d2dae7" stroke="#15161a" stroke-width="0.9" stroke-linejoin="round" /><path d="M691.9,262.8 L694.4,268.2 L696.6,278.1 L700.0,279.0 L705.5,276.7 L706.4,281.9 L708.3,288.4 L708.3,295.5 L711.1,291.3 L709.2,279.8 L706.9,270.8 L713.9,265.2 L716.7,259.8 L708.9,254.7 L708.3,243.9 L705.5,241.4 L699.7,239.1 L697.2,243.2 L693.0,250.1 Z" fill="#f8f5f0" stroke="#bdbbc6" stroke-width="0.8" stroke-linejoin="round" /><path d="M711.1,291.3 L709.2,279.8 L706.9,270.8 L713.9,265.2 L716.7,259.8 L718.6,259.5 L725.0,271.1 L728.4,270.8 L732.8,276.1 L737.0,280.4 L733.4,282.7 L733.4,289.0 L729.8,291.3 L725.9,294.1 L720.3,289.0 L718.9,289.3 L714.7,285.6 L712.2,288.7 Z" fill="#f8f5f0" stroke="#bdbbc6" stroke-width="0.8" stroke-linejoin="round" /><path d="M711.1,291.3 L709.2,279.8 L706.9,270.8 L713.9,265.2 L715.3,272.6 L719.5,273.2 L726.4,278.4 L720.9,282.7 L718.9,289.3 L714.7,285.6 L712.2,288.7 Z" fill="#cfd8e5" stroke="#15161a" stroke-width="0.9" stroke-linejoin="round" /><path d="M718.6,259.5 L731.2,258.3 L734.8,262.2 L730.9,265.8 L728.4,270.8 L732.8,276.1 L737.0,280.4 L738.4,286.2 L737.0,291.9 L731.4,294.4 L731.2,296.9 L726.4,299.5 L725.9,294.1 L729.8,291.3 L733.4,289.0 L733.4,282.7 L729.2,276.9 L725.0,271.1 L722.2,265.2 Z" fill="#9ebcdf" stroke="#15161a" stroke-width="0.9" stroke-linejoin="round" /><path d="M656.8,235.3 L661.0,234.7 L667.9,240.4 L679.6,242.6 L679.1,247.3 L670.7,246.7 L662.4,243.6 L658.2,240.7 Z" fill="#f8f5f0" stroke="#bdbbc6" stroke-width="0.8" stroke-linejoin="round" /><path d="M680.5,261.6 L684.7,260.7 L689.7,259.2 L691.9,262.8 L691.1,253.2 L688.8,251.3 L681.9,248.2 L680.5,254.7 Z" fill="#f8f5f0" stroke="#bdbbc6" stroke-width="0.8" stroke-linejoin="round" /><path d="M563.5,205.9 L567.7,207.6 L570.5,210.5 L576.0,213.3 L584.1,212.6 L588.6,209.1 L593.6,208.3 L599.2,210.8 L602.8,213.9 L604.4,217.7 L602.5,224.5 L603.6,231.1 L606.1,232.7 L603.6,236.6 L608.1,237.9 L610.3,244.8 L608.9,247.3 L605.6,251.0 L599.7,250.4 L593.6,249.2 L586.3,247.0 L580.2,243.9 L575.5,239.1 L570.5,235.0 L567.4,236.3 L567.7,235.9 L566.3,232.7 L562.1,226.2 L560.7,216.4 L557.1,211.5 L558.8,203.0 Z" fill="#c6d1e1" stroke="#15161a" stroke-width="0.9" stroke-linejoin="round" /><path d="M474.4,182.2 L476.3,186.1 L482.7,190.7 L488.0,195.3 L488.0,200.8 L490.3,203.3 L492.5,199.0 L498.1,197.1 L506.4,196.4 L507.8,195.6 L512.0,194.9 L513.7,188.1 L509.8,186.5 L503.6,188.1 L497.2,186.1 L493.9,183.8 L490.5,178.6 L486.4,179.4 L481.3,179.0 L479.1,177.0 L477.2,179.0 L474.4,180.6 Z" fill="#f8f5f0" stroke="#bdbbc6" stroke-width="0.8" stroke-linejoin="round" /><path d="M477.2,179.0 L479.1,177.0 L481.3,179.0 L486.4,179.4 L490.5,178.6 L493.9,183.8 L497.2,186.1 L503.6,188.1 L509.8,186.5 L513.7,188.1" fill="none" stroke="#15161a" stroke-width="1.0" stroke-linejoin="round"/><path d="M488.0,200.8 L490.3,203.3 L492.5,199.0 L498.1,197.1 L506.4,196.4 L507.8,195.6" fill="none" stroke="#15161a" stroke-width="1.0" stroke-linejoin="round"/><path d="M429.0,189.2 L442.4,192.6" fill="none" stroke="#15161a" stroke-width="0.8" stroke-linejoin="round"/><path d="M408.9,194.5 L414.5,194.5 L413.1,203.7 L413.9,211.5" fill="none" stroke="#15161a" stroke-width="0.8" stroke-linejoin="round"/><path d="M441.0,158.0 L450.2,164.6 L456.8,166.7 L454.9,172.5 L450.7,178.2 L453.5,186.9" fill="none" stroke="#15161a" stroke-width="0.8" stroke-linejoin="round"/><path d="M450.7,146.7 L453.5,155.8 L450.7,164.6" fill="none" stroke="#15161a" stroke-width="0.8" stroke-linejoin="round"/><path d="M458.0,140.0 L473.3,145.3 L475.8,158.9 L468.8,161.1 L472.4,167.9 L470.2,172.9 L460.7,172.9 L454.9,172.5" fill="none" stroke="#15161a" stroke-width="0.8" stroke-linejoin="round"/><path d="M460.7,172.9 L468.3,175.8 L472.2,180.2" fill="none" stroke="#15161a" stroke-width="0.8" stroke-linejoin="round"/><path d="M470.2,172.9 L479.1,175.8 L481.3,179.0 L486.4,179.4 L488.0,195.3" fill="none" stroke="#15161a" stroke-width="0.8" stroke-linejoin="round"/><path d="M475.8,158.9 L486.9,164.6 L496.9,166.3 L495.5,169.2" fill="none" stroke="#15161a" stroke-width="0.8" stroke-linejoin="round"/><path d="M468.3,143.4 L473.3,145.3" fill="none" stroke="#15161a" stroke-width="0.8" stroke-linejoin="round"/><path d="M516.2,112.5 L517.5,103.3 L514.8,89.8 L517.5,69.7 L513.4,57.9 L513.4,46.9" fill="none" stroke="#15161a" stroke-width="0.8" stroke-linejoin="round"/><path d="M468.8,113.6 L466.0,96.1 L473.0,80.0 L481.3,58.7 L489.7,54.8 L500.8,57.9 L513.4,57.9" fill="none" stroke="#15161a" stroke-width="0.8" stroke-linejoin="round"/><path d="M493.9,127.0 L510.6,127.0 L512.5,133.6" fill="none" stroke="#15161a" stroke-width="0.8" stroke-linejoin="round"/><path d="M499.4,144.8 L497.5,142.9" fill="none" stroke="#15161a" stroke-width="0.8" stroke-linejoin="round"/><path d="M497.2,186.1 L491.1,194.5 L496.7,197.1 L506.4,196.4 L513.7,188.1" fill="none" stroke="#15161a" stroke-width="0.8" stroke-linejoin="round"/><path d="M543.5,175.0 L546.0,188.8 L555.1,192.6 L563.5,196.4 L569.9,195.6" fill="none" stroke="#15161a" stroke-width="0.8" stroke-linejoin="round"/><path d="M534.0,220.1 L542.1,224.8 L542.6,228.8 L537.0,237.5 L534.8,242.3" fill="none" stroke="#15161a" stroke-width="0.8" stroke-linejoin="round"/><path d="M531.2,237.5 L534.3,234.3 L542.6,228.8" fill="none" stroke="#15161a" stroke-width="0.8" stroke-linejoin="round"/><path d="M638.4,146.7 L647.1,144.8" fill="none" stroke="#15161a" stroke-width="0.8" stroke-linejoin="round"/><path d="M603.3,146.7 L604.7,158.9" fill="none" stroke="#15161a" stroke-width="0.8" stroke-linejoin="round"/><path d="M677.1,165.8 L678.5,165.8" fill="none" stroke="#15161a" stroke-width="0.8" stroke-linejoin="round"/><path d="M767.4,176.2 L771.0,162.4 L787.7,163.3 L798.8,172.1 L804.4,170.0 L810.0,169.2 L807.2,183.0 L798.8,191.5" fill="none" stroke="#15161a" stroke-width="1.2" stroke-linejoin="round"/><path d="M641.5,227.8 L652.6,227.8 L656.8,235.3" fill="none" stroke="#15161a" stroke-width="0.9" stroke-linejoin="round"/><path d="M679.6,242.6 L690.2,242.9 L699.7,239.1 L705.5,241.4" fill="none" stroke="#15161a" stroke-width="0.9" stroke-linejoin="round"/><path d="M789.4,202.6 L784.9,209.1 L780.7,209.8" fill="none" stroke="#15161a" stroke-width="0.9" stroke-linejoin="round"/><path d="M418.1,162.0 L424.3,161.1 L431.2,159.3 L437.6,157.6 L438.7,150.8 L434.8,147.1 L432.6,141.9 L429.3,136.6 L427.6,133.1 L429.0,127.0 L424.8,126.0 L422.9,121.2 L420.1,121.2 L418.1,126.5 L416.7,131.1 L418.7,136.1 L420.6,140.5 L425.6,140.0 L424.8,144.8 L425.6,147.6 L421.5,147.6 L422.6,152.2 L419.5,154.9 L425.1,156.2 L422.3,157.1 L419.2,159.3 Z" fill="#c9d3e2" stroke="#15161a" stroke-width="0.9" stroke-linejoin="round" /><path d="M417.3,152.6 L417.3,145.3 L418.4,141.4 L413.7,138.1 L410.3,141.0 L406.1,143.4 L406.4,147.6 L405.3,153.1 L407.5,155.4 L411.2,154.5 L416.2,152.6 Z" fill="#d3dbe8" stroke="#15161a" stroke-width="0.9" stroke-linejoin="round" /><path d="M468.5,208.7 L477.4,208.0 L476.1,213.6 L468.8,210.5 Z" fill="#c9d3e2" stroke="#15161a" stroke-width="0.9" stroke-linejoin="round" /><path d="M456.8,198.2 L461.3,198.2 L460.7,205.1 L457.4,205.5 Z" fill="#c9d3e2" stroke="#15161a" stroke-width="0.9" stroke-linejoin="round" /><path d="M458.0,191.1 L460.5,190.7 L460.2,196.8 L458.5,196.0 Z" fill="#c9d3e2" stroke="#15161a" stroke-width="0.9" stroke-linejoin="round" /><path d="M499.4,217.4 L507.2,218.4 L506.4,219.4 L499.4,218.8 Z" fill="#c9d3e2" stroke="#15161a" stroke-width="0.9" stroke-linejoin="round" /><path d="M524.0,219.4 L530.4,217.1 L528.7,220.8 L524.5,220.5 Z" fill="#f8f5f0" stroke="#aecdef" stroke-width="1.2" stroke-linejoin="round" /><path d="M578.8,34.2 L587.2,20.5 L595.5,5.6 L601.1,10.7 L590.0,29.8 L592.7,41.9 L581.6,40.2 Z" fill="#c9d3e2" stroke="#15161a" stroke-width="0.9" stroke-linejoin="round" /><path d="M736.5,268.8 L741.7,266.4 L743.1,267.9 L739.0,272.0 Z" fill="#c9d3e2" stroke="#15161a" stroke-width="0.9" stroke-linejoin="round" /><path d="M656.2,306.8 L656.5,299.8 L657.4,296.1 L660.4,299.8 L661.8,303.1 L659.9,306.5 Z" fill="#f8f5f0" stroke="#aecdef" stroke-width="1.2" stroke-linejoin="round" /><path d="M768.5,257.7 L771.0,251.0 L773.5,251.6 L770.4,261.0 Z" fill="#c9d3e2" stroke="#15161a" stroke-width="0.9" stroke-linejoin="round" /><path d="M795.2,225.5 L796.6,231.7 L799.4,231.4 L801.6,224.5 L798.8,221.1 L804.4,217.7 L811.4,217.4 L814.7,211.9 L816.4,213.3 L822.5,208.3 L823.9,202.3 L823.9,197.1 L828.1,197.5 L829.5,203.3 L826.7,208.3 L826.4,213.3 L825.3,217.7 L823.3,219.8 L820.6,220.8 L815.5,220.8 L812.2,224.5 L810.0,220.8 L805.8,222.1 L802.5,225.2 L801.3,223.1 L798.6,223.1 Z" fill="#c9d3e2" stroke="#15161a" stroke-width="0.9" stroke-linejoin="round" /><path d="M823.9,196.8 L825.3,189.6 L828.4,181.4 L830.9,183.0 L834.5,186.1 L838.7,185.7 L839.2,189.6 L835.0,191.1 L832.8,194.5 L827.5,192.6 Z" fill="#c9d3e2" stroke="#15161a" stroke-width="0.9" stroke-linejoin="round" /><path d="M829.2,178.6 L828.9,167.5 L830.0,155.8 L828.6,147.6 L832.3,142.9 L833.1,153.6 L832.8,165.8 L831.1,175.0 Z" fill="#c9d3e2" stroke="#15161a" stroke-width="0.9" stroke-linejoin="round" /><path d="M768.2,277.5 L769.9,271.1 L774.3,271.1 L775.2,275.5 L772.4,279.0 L773.5,283.6 L779.3,288.2 L777.1,286.4 L770.4,284.7 L769.9,281.6 Z" fill="#d0d9e6" stroke="#15161a" stroke-width="0.9" stroke-linejoin="round" /><path d="M773.8,304.3 L778.5,300.6 L783.5,296.4 L786.3,302.6 L784.9,306.2 L783.0,307.9 L779.9,305.7 L777.1,302.6 Z" fill="#d0d9e6" stroke="#15161a" stroke-width="0.9" stroke-linejoin="round" /><path d="M773.8,294.1 L779.3,291.3 L783.5,291.6 L782.1,295.5 L777.1,297.8 L774.9,296.1 Z" fill="#d0d9e6" stroke="#15161a" stroke-width="0.9" stroke-linejoin="round" /><path d="M737.3,319.3 L739.2,324.9 L741.2,329.1 L741.7,331.8 L745.1,332.4 L748.7,331.8 L752.9,334.6 L757.1,333.2 L758.5,330.2 L757.9,325.7 L761.8,321.8 L762.4,318.5 L765.4,313.5 L764.0,309.6 L766.3,308.7 L762.1,306.2 L759.8,304.0 L757.1,306.8 L754.8,309.6 L751.5,311.0 L748.7,314.6 L744.5,316.5 L743.1,318.8 L739.5,317.9 Z" fill="#ccd6e4" stroke="#15161a" stroke-width="0.9" stroke-linejoin="round" /><path d="M798.8,327.1 L803.0,324.6 L807.2,326.0 L810.0,332.7 L816.9,327.7 L821.1,329.6 L826.7,330.7 L833.6,333.5 L840.1,337.1 L844.8,340.2 L844.0,344.1 L846.7,346.1 L849.8,350.1 L854.0,352.3 L850.9,352.9 L844.8,351.7 L840.6,346.4 L835.6,345.3 L833.1,348.6 L831.1,349.8 L826.7,348.9 L821.7,346.1 L818.3,347.0 L819.7,343.0 L817.8,338.5 L811.4,335.8 L807.5,334.1 L803.8,334.9 L801.6,331.3 L805.8,329.9 L801.6,329.3 L798.6,327.7 Z" fill="#f8f5f0" stroke="#aecdef" stroke-width="1.2" stroke-linejoin="round" /><path d="M847.6,338.8 L852.6,338.3 L857.3,335.2 L856.8,339.7 L851.8,340.8 L847.3,340.5 Z" fill="#f8f5f0" stroke="#aecdef" stroke-width="1.2" stroke-linejoin="round" /><path d="M749.8,386.3 L751.2,393.8 L750.1,398.5 L753.2,407.2 L754.3,415.9 L756.2,421.8 L754.3,425.2 L761.2,427.9 L767.1,424.9 L773.8,423.9 L778.8,423.5 L784.9,418.5 L793.0,416.6 L799.7,415.9 L804.4,417.9 L808.0,420.8 L810.5,426.2 L812.2,426.9 L816.1,422.8 L817.8,419.5 L816.9,425.5 L815.3,428.6 L818.9,429.3 L822.8,434.1 L825.6,437.9 L829.5,439.4 L833.9,440.8 L837.8,437.9 L841.4,441.5 L845.6,437.6 L851.5,436.2 L852.0,431.0 L854.0,425.5 L856.2,420.8 L858.7,417.6 L860.7,412.7 L861.8,405.6 L860.4,399.4 L860.7,396.0 L855.9,392.3 L854.0,388.1 L850.4,387.2 L848.4,381.8 L842.3,377.4 L840.6,373.0 L838.9,367.2 L838.7,365.1 L835.0,363.4 L833.9,358.6 L830.9,353.4 L829.5,356.6 L828.4,361.4 L828.4,370.1 L826.1,373.0 L821.7,372.4 L816.9,368.6 L812.2,365.7 L815.0,360.6 L815.3,357.7 L811.9,357.1 L803.6,355.7 L801.1,355.1 L796.6,357.7 L794.9,365.7 L791.3,365.7 L787.7,362.6 L783.5,364.3 L780.5,369.5 L777.9,373.0 L774.6,374.4 L772.4,378.8 L765.4,380.3 L759.8,382.4 L755.7,384.2 L752.3,386.9 Z" fill="#c9d4e3" stroke="#15161a" stroke-width="0.9" stroke-linejoin="round" /><path d="M837.0,447.7 L842.0,449.1 L847.0,448.4 L846.7,452.9 L844.8,457.0 L840.6,458.5 L838.4,453.2 Z" fill="#c9d4e3" stroke="#15161a" stroke-width="0.9" stroke-linejoin="round" /><path d="M737.3,319.3 L739.2,324.9 L741.2,329.1 L741.7,331.8 L745.1,332.4 L748.7,331.8 L752.9,334.6 L757.1,333.2 L758.5,330.2 L757.9,325.7 L761.8,321.8 L762.4,318.5 L762.4,311.8 L757.1,311.5 L754.3,316.5 L751.5,319.9 L747.3,319.3 L743.1,320.2 L739.5,318.2 Z" fill="#e9866c" stroke="#15161a" stroke-width="1.0" stroke-linejoin="round" /><path d="M699.4,307.9 L705.5,309.0 L708.3,312.4 L713.9,317.9 L719.5,322.1 L723.1,326.3 L725.0,329.1 L729.2,331.8 L729.2,336.9 L728.7,339.7 L725.3,339.9 L720.9,335.2 L718.1,333.2 L715.3,329.6 L713.1,325.7 L709.7,321.6 L708.3,317.9 L704.1,313.8 Z" fill="#e9866c" stroke="#15161a" stroke-width="1.0" stroke-linejoin="round" /><path d="M727.0,342.5 L730.6,340.2 L735.6,341.1 L742.3,341.6 L747.3,342.7 L752.9,345.0 L752.9,347.8 L745.9,346.7 L736.7,345.3 L730.6,344.1 Z" fill="#e9866c" stroke="#15161a" stroke-width="1.0" stroke-linejoin="round" /><path d="M753.2,346.4 L755.7,348.1 L759.8,348.6 L765.4,348.1 L769.6,349.5 L773.8,347.8 L782.1,347.5 L787.7,346.7 L782.1,350.1 L777.9,352.3 L768.2,352.0 L759.8,349.2 L754.3,348.4 Z" fill="#e9866c" stroke="#15161a" stroke-width="1.0" stroke-linejoin="round" /><path d="M766.8,338.8 L766.5,333.2 L764.9,331.0 L767.4,324.9 L768.8,322.1 L771.0,319.9 L776.6,321.0 L781.6,319.3 L780.2,322.4 L775.2,322.1 L770.1,322.1 L768.2,325.2 L770.4,327.4 L775.7,326.0 L772.4,328.8 L775.2,332.4 L777.1,336.9 L774.3,336.3 L771.8,331.8 L770.7,336.0 L769.3,339.1 Z" fill="#e9866c" stroke="#15161a" stroke-width="1.0" stroke-linejoin="round" /><path d="M789.1,318.5 L791.9,319.3 L790.5,323.5 L792.4,325.7 L789.4,324.3 L788.5,320.7 Z" fill="#e9866c" stroke="#15161a" stroke-width="1.0" stroke-linejoin="round" /><path d="M790.5,332.4 L798.3,332.7 L797.4,334.1 L791.0,333.5 Z" fill="#e9866c" stroke="#15161a" stroke-width="1.0" stroke-linejoin="round" /><path d="M798.8,327.1 L803.0,324.6 L807.2,326.0 L810.0,332.7 L816.9,327.7 L821.1,329.6 L826.7,330.7 L826.7,348.9 L821.7,346.1 L818.3,347.0 L819.7,343.0 L817.8,338.5 L811.4,335.8 L807.5,334.1 L803.8,334.9 L801.6,331.3 L805.8,329.9 L801.6,329.3 L798.6,327.7 Z" fill="#e9866c" stroke="#15161a" stroke-width="1.0" stroke-linejoin="round" /></svg>
<div class="t" style="left:100.6px;top:137.9px;font-size:18.5px;line-height:18.5px;font-weight:700;color:#a3acba;text-shadow:0 0 1px rgba(255,255,255,0.8);letter-spacing:0.2px">NORTH</div>
<div class="t" style="left:93.6px;top:160.0px;font-size:18.5px;line-height:18.5px;font-weight:700;color:#a3acba;text-shadow:0 0 1px rgba(255,255,255,0.8);letter-spacing:0.2px">AMERICA</div>
<div class="t" style="left:233.6px;top:363.0px;font-size:18.5px;line-height:18.5px;font-weight:700;color:#a3acba;text-shadow:0 0 1px rgba(255,255,255,0.8);letter-spacing:0.2px">SOUTH</div>
<div class="t" style="left:224.0px;top:385.5px;font-size:18.5px;line-height:18.5px;font-weight:700;color:#a3acba;text-shadow:0 0 1px rgba(255,255,255,0.8);letter-spacing:0.2px">AMERICA</div>
<div class="t" style="left:451.7px;top:282.0px;font-size:18.2px;line-height:18.2px;font-weight:700;color:#343741;text-shadow:0 0 1px rgba(255,255,255,0.8);letter-spacing:0.2px">AFRICA</div>
<div class="t" style="left:662.8px;top:147.1px;font-size:18.5px;line-height:18.5px;font-weight:700;color:#a3acba;text-shadow:0 0 1px rgba(255,255,255,0.8);letter-spacing:0.2px">ASIA</div>
<div class="t" style="left:779.5px;top:365.7px;font-size:18.5px;line-height:18.5px;font-weight:700;color:#a3acba;text-shadow:0 0 1px rgba(255,255,255,0.8);letter-spacing:0.2px">OCEANIA</div>
<div class="a" style="left:16px;top:16px;width:42px;height:84px;background:#fff;border-radius:6px;box-shadow:0 1px 4px rgba(0,0,0,0.10),0 4px 12px rgba(0,0,0,0.08),0 18px 36px rgba(0,0,0,0.09)"><svg class="a" style="left:0;top:0" width="42" height="84" viewBox="0 0 42 84"><circle cx="20" cy="20" r="10" fill="#343741"/><path d="M15 20H25M20 15V25" stroke="#fff" stroke-width="2.2"/><circle cx="20" cy="63.5" r="10" fill="#343741"/><path d="M15 63.5H25" stroke="#fff" stroke-width="2.2"/></svg></div>
<div class="a" style="left:16px;top:112px;width:42px;height:42px;background:#fff;border-radius:6px;box-shadow:0 1px 4px rgba(0,0,0,0.10),0 4px 12px rgba(0,0,0,0.08),0 18px 36px rgba(0,0,0,0.09)"><svg class="a" style="left:0;top:0" width="42" height="42" viewBox="0 0 42 42"><circle cx="20.5" cy="21" r="8" fill="none" stroke="#343741" stroke-width="1.5" stroke-dasharray="4 2.3"/><circle cx="20.5" cy="21" r="1.5" fill="#343741"/><path d="M20.5 10V15M20.5 27V32M9.5 21H14.5M26.5 21H31.5" stroke="#343741" stroke-width="1.5"/></svg></div>
<div class="a" style="left:16px;top:164px;width:42px;height:43px;background:#fff;border-radius:6px;box-shadow:0 1px 4px rgba(0,0,0,0.10),0 4px 12px rgba(0,0,0,0.08),0 18px 36px rgba(0,0,0,0.09)"><svg class="a" style="left:0;top:0" width="42" height="43" viewBox="0 0 42 43"><path d="M13 30L29 14M22 14H29V21M13 23V30H20" fill="none" stroke="#343741" stroke-width="1.5"/></svg></div>
<div class="a" style="left:812px;top:16px;width:42px;height:42px;background:#fff;border-radius:6px;box-shadow:0 1px 4px rgba(0,0,0,0.10),0 4px 12px rgba(0,0,0,0.08),0 18px 36px rgba(0,0,0,0.09)"><svg class="a" style="left:0;top:0" width="42" height="42" viewBox="0 0 42 42"><path d="M18 15H30M18 21H30M18 27H30" stroke="#343741" stroke-width="1.5"/><path d="M15 16L10 21L15 26M10 21H22" fill="none" stroke="#343741" stroke-width="1.5"/></svg></div>
<div class="t" style="left:779.5px;top:431.29999999999995px;font-size:14.2px;line-height:17px;color:#343741"><b>zoom:</b> <span style="color:#69707d">0.55</span></div>
<div class="t" style="left:16.0px;top:468.8px;font-size:14.35px;line-height:16px;color:#343741;font-weight:700">© OpenStreetMap contributors</div>
<svg class="a" style="left:231.0px;top:469.8px" width="13" height="13" viewBox="0 0 13 13"><path d="M7.5 1H12V5.5M12 1L6 7M5 2H1V12H11V8" fill="none" stroke="#343741" stroke-width="1.2"/></svg>
<div class="t" style="left:247.0px;top:468.8px;font-size:14.35px;line-height:16px;color:#343741;font-weight:700">, Made with NaturalEarth</div>
<svg class="a" style="left:423.0px;top:469.8px" width="13" height="13" viewBox="0 0 13 13"><path d="M7.5 1H12V5.5M12 1L6 7M5 2H1V12H11V8" fill="none" stroke="#343741" stroke-width="1.2"/></svg>
<div class="t" style="left:438.5px;top:468.8px;font-size:14.35px;line-height:16px;color:#343741;font-weight:700">, Elastic Maps Service</div>
<svg class="a" style="left:591.0px;top:469.8px" width="13" height="13" viewBox="0 0 13 13"><path d="M7.5 1H12V5.5M12 1L6 7M5 2H1V12H11V8" fill="none" stroke="#343741" stroke-width="1.2"/></svg>
<div class="t" style="left:606.5px;top:468.8px;font-size:14.35px;line-height:16px;color:#343741;font-weight:700">, OpenMapTiles</div>
<svg class="a" style="left:718.0px;top:469.8px" width="13" height="13" viewBox="0 0 13 13"><path d="M7.5 1H12V5.5M12 1L6 7M5 2H1V12H11V8" fill="none" stroke="#343741" stroke-width="1.2"/></svg>
<div class="t" style="left:733.0px;top:468.8px;font-size:14.35px;line-height:16px;color:#343741;font-weight:700">, OpenStreetMap</div>
<div class="t" style="left:16.0px;top:495.0px;font-size:14.35px;line-height:16px;color:#343741;font-weight:700">contributors</div>
<svg class="a" style="left:108.0px;top:496.0px" width="13" height="13" viewBox="0 0 13 13"><path d="M7.5 1H12V5.5M12 1L6 7M5 2H1V12H11V8" fill="none" stroke="#343741" stroke-width="1.2"/></svg>
</div>
<div class="panel" style="left:1258px;top:1288px;width:916px;height:700px"></div>
<div class="t " style="left:1281.3px;top:1316.6px;font-size:27.5px;line-height:27.5px;color:#1a1c21;font-weight:400;">Visitor breakdown</div>
<div class="t " style="left:1281.3px;top:1370.8px;font-size:20.6px;line-height:20.6px;color:#1a1c21;font-weight:700;">Browser</div>
<div class="t " style="left:1732.0px;top:1370.5px;font-size:20.9px;line-height:20.9px;color:#1a1c21;font-weight:700;">Operating system</div>
<svg class="a" style="left:0;top:0" width="2204" height="1904"><path d="M1422.7,1570.3 L1422.70,1428.30 A142,142 0 1 1 1382.85,1706.59 Z" fill="#54b399" stroke="#fff" stroke-width="1.5" stroke-linejoin="round"/><path d="M1422.7,1570.3 L1382.85,1706.59 A142,142 0 0 1 1380.00,1705.73 Z" fill="#b9a888" stroke="#fff" stroke-width="1.5" stroke-linejoin="round"/><path d="M1422.7,1570.3 L1380.00,1705.73 A142,142 0 0 1 1370.66,1702.42 Z" fill="#da8b45" stroke="#fff" stroke-width="1.5" stroke-linejoin="round"/><path d="M1422.7,1570.3 L1370.66,1702.42 A142,142 0 0 1 1358.23,1696.82 Z" fill="#aa6556" stroke="#fff" stroke-width="1.5" stroke-linejoin="round"/><path d="M1422.7,1570.3 L1358.23,1696.82 A142,142 0 0 1 1341.25,1686.62 Z" fill="#e7664c" stroke="#fff" stroke-width="1.5" stroke-linejoin="round"/><path d="M1422.7,1570.3 L1341.25,1686.62 A142,142 0 0 1 1322.82,1671.23 Z" fill="#d36086" stroke="#fff" stroke-width="1.5" stroke-linejoin="round"/><path d="M1422.7,1570.3 L1322.82,1671.23 A142,142 0 0 1 1293.38,1628.96 Z" fill="#ca8eae" stroke="#fff" stroke-width="1.5" stroke-linejoin="round"/><path d="M1422.7,1570.3 L1293.38,1628.96 A142,142 0 0 1 1298.15,1502.11 Z" fill="#9170b8" stroke="#fff" stroke-width="1.5" stroke-linejoin="round"/><path d="M1422.7,1570.3 L1298.15,1502.11 A142,142 0 0 1 1422.70,1428.30 Z" fill="#6092c0" stroke="#fff" stroke-width="1.5" stroke-linejoin="round"/></svg>
<svg class="a" style="left:0;top:0" width="2204" height="1904"><path d="M1875,1570.3 L1875.00,1428.30 A142,142 0 0 1 1893.29,1711.12 Z" fill="#54b399" stroke="#fff" stroke-width="1.5" stroke-linejoin="round"/><path d="M1875,1570.3 L1893.29,1711.12 A142,142 0 0 1 1888.86,1711.62 Z" fill="#d6bf57" stroke="#fff" stroke-width="1.5" stroke-linejoin="round"/><path d="M1875,1570.3 L1888.86,1711.62 A142,142 0 0 1 1883.67,1712.04 Z" fill="#b9a888" stroke="#fff" stroke-width="1.5" stroke-linejoin="round"/><path d="M1875,1570.3 L1883.67,1712.04 A142,142 0 0 1 1872.03,1712.27 Z" fill="#da8b45" stroke="#fff" stroke-width="1.5" stroke-linejoin="round"/><path d="M1875,1570.3 L1872.03,1712.27 A142,142 0 0 1 1854.99,1710.88 Z" fill="#aa6556" stroke="#fff" stroke-width="1.5" stroke-linejoin="round"/><path d="M1875,1570.3 L1854.99,1710.88 A142,142 0 0 1 1836.10,1706.87 Z" fill="#e7664c" stroke="#fff" stroke-width="1.5" stroke-linejoin="round"/><path d="M1875,1570.3 L1836.10,1706.87 A142,142 0 0 1 1816.34,1699.62 Z" fill="#d36086" stroke="#fff" stroke-width="1.5" stroke-linejoin="round"/><path d="M1875,1570.3 L1816.34,1699.62 A142,142 0 0 1 1763.56,1658.31 Z" fill="#ca8eae" stroke="#fff" stroke-width="1.5" stroke-linejoin="round"/><path d="M1875,1570.3 L1763.56,1658.31 A142,142 0 0 1 1733.22,1578.23 Z" fill="#9170b8" stroke="#fff" stroke-width="1.5" stroke-linejoin="round"/><path d="M1875,1570.3 L1733.22,1578.23 A142,142 0 0 1 1875.00,1428.30 Z" fill="#6092c0" stroke="#fff" stroke-width="1.5" stroke-linejoin="round"/></svg>
<div class="a" style="left:1571.4px;top:1432.4px;width:11px;height:11px;border-radius:50%;background:#54b399"></div>
<div class="t " style="left:1593.5px;top:1430.8px;font-size:16.7px;line-height:16.7px;color:#343741;font-weight:400;">Chrome</div>
<div class="a" style="left:1571.4px;top:1461.7px;width:11px;height:11px;border-radius:50%;background:#6092c0"></div>
<div class="t " style="left:1593.5px;top:1460.1px;font-size:16.7px;line-height:16.7px;color:#343741;font-weight:400;">Firefox</div>
<div class="a" style="left:1571.4px;top:1491.0px;width:11px;height:11px;border-radius:50%;background:#9170b8"></div>
<div class="t " style="left:1593.5px;top:1489.4px;font-size:16.7px;line-height:16.7px;color:#343741;font-weight:400;">Safari</div>
<div class="a" style="left:1571.4px;top:1520.3px;width:11px;height:11px;border-radius:50%;background:#ca8eae"></div>
<div class="t " style="left:1593.5px;top:1518.7px;font-size:16.7px;line-height:16.7px;color:#343741;font-weight:400;">Chromium</div>
<div class="a" style="left:1571.4px;top:1549.6px;width:11px;height:11px;border-radius:50%;background:#d36086"></div>
<div class="t " style="left:1593.5px;top:1548.0px;font-size:16.7px;line-height:16.7px;color:#343741;font-weight:400;">WebKit Nigh...</div>
<div class="a" style="left:1571.4px;top:1578.9px;width:11px;height:11px;border-radius:50%;background:#e7664c"></div>
<div class="t " style="left:1593.5px;top:1577.3px;font-size:16.7px;line-height:16.7px;color:#343741;font-weight:400;">Mobile Safari</div>
<div class="a" style="left:1571.4px;top:1608.2px;width:11px;height:11px;border-radius:50%;background:#aa6556"></div>
<div class="t " style="left:1593.5px;top:1606.6px;font-size:16.7px;line-height:16.7px;color:#343741;font-weight:400;">Firefox Alpha</div>
<div class="a" style="left:1571.4px;top:1637.5px;width:11px;height:11px;border-radius:50%;background:#da8b45"></div>
<div class="t " style="left:1593.5px;top:1635.9px;font-size:16.7px;line-height:16.7px;color:#343741;font-weight:400;">Googlebot</div>
<div class="a" style="left:1571.4px;top:1666.8px;width:11px;height:11px;border-radius:50%;background:#b9a888"></div>
<div class="t " style="left:1593.5px;top:1665.2px;font-size:16.7px;line-height:16.7px;color:#343741;font-weight:400;">Android</div>
<div class="a" style="left:2022.5px;top:1432.4px;width:11px;height:11px;border-radius:50%;background:#54b399"></div>
<div class="t " style="left:2044.2px;top:1430.8px;font-size:16.7px;line-height:16.7px;color:#343741;font-weight:400;">Windows</div>
<div class="a" style="left:2022.5px;top:1461.7px;width:11px;height:11px;border-radius:50%;background:#6092c0"></div>
<div class="t " style="left:2044.2px;top:1460.1px;font-size:16.7px;line-height:16.7px;color:#343741;font-weight:400;">Mac OS X</div>
<div class="a" style="left:2022.5px;top:1491.0px;width:11px;height:11px;border-radius:50%;background:#9170b8"></div>
<div class="t " style="left:2044.2px;top:1489.4px;font-size:16.7px;line-height:16.7px;color:#343741;font-weight:400;">Linux</div>
<div class="a" style="left:2022.5px;top:1520.3px;width:11px;height:11px;border-radius:50%;background:#ca8eae"></div>
<div class="t " style="left:2044.2px;top:1518.7px;font-size:16.7px;line-height:16.7px;color:#343741;font-weight:400;">Ubuntu</div>
<div class="a" style="left:2022.5px;top:1549.6px;width:11px;height:11px;border-radius:50%;background:#d36086"></div>
<div class="t " style="left:2044.2px;top:1548.0px;font-size:16.7px;line-height:16.7px;color:#343741;font-weight:400;">Chrome OS</div>
<div class="a" style="left:2022.5px;top:1578.9px;width:11px;height:11px;border-radius:50%;background:#e7664c"></div>
<div class="t " style="left:2044.2px;top:1577.3px;font-size:16.7px;line-height:16.7px;color:#343741;font-weight:400;">iOS</div>
<div class="a" style="left:2022.5px;top:1608.2px;width:11px;height:11px;border-radius:50%;background:#aa6556"></div>
<div class="t " style="left:2044.2px;top:1606.6px;font-size:16.7px;line-height:16.7px;color:#343741;font-weight:400;">Others</div>
<div class="a" style="left:2022.5px;top:1637.5px;width:11px;height:11px;border-radius:50%;background:#da8b45"></div>
<div class="t " style="left:2044.2px;top:1635.9px;font-size:16.7px;line-height:16.7px;color:#343741;font-weight:400;">Slackware</div>
<div class="a" style="left:2022.5px;top:1666.8px;width:11px;height:11px;border-radius:50%;background:#b9a888"></div>
<div class="t " style="left:2044.2px;top:1665.2px;font-size:16.7px;line-height:16.7px;color:#343741;font-weight:400;">FreeBSD</div>
<div class="a" style="left:2022.5px;top:1696.1px;width:11px;height:11px;border-radius:50%;background:#d6bf57"></div>
<div class="t " style="left:2044.2px;top:1694.5px;font-size:16.7px;line-height:16.7px;color:#343741;font-weight:400;">NetBSD</div>
<svg class="a" style="left:0;top:1868px" width="10" height="36" viewBox="0 0 10 36"><path d="M0 0 C1 18,5 30,10 36 L0 36 Z" fill="#1a0508"/></svg></div></body></html>
